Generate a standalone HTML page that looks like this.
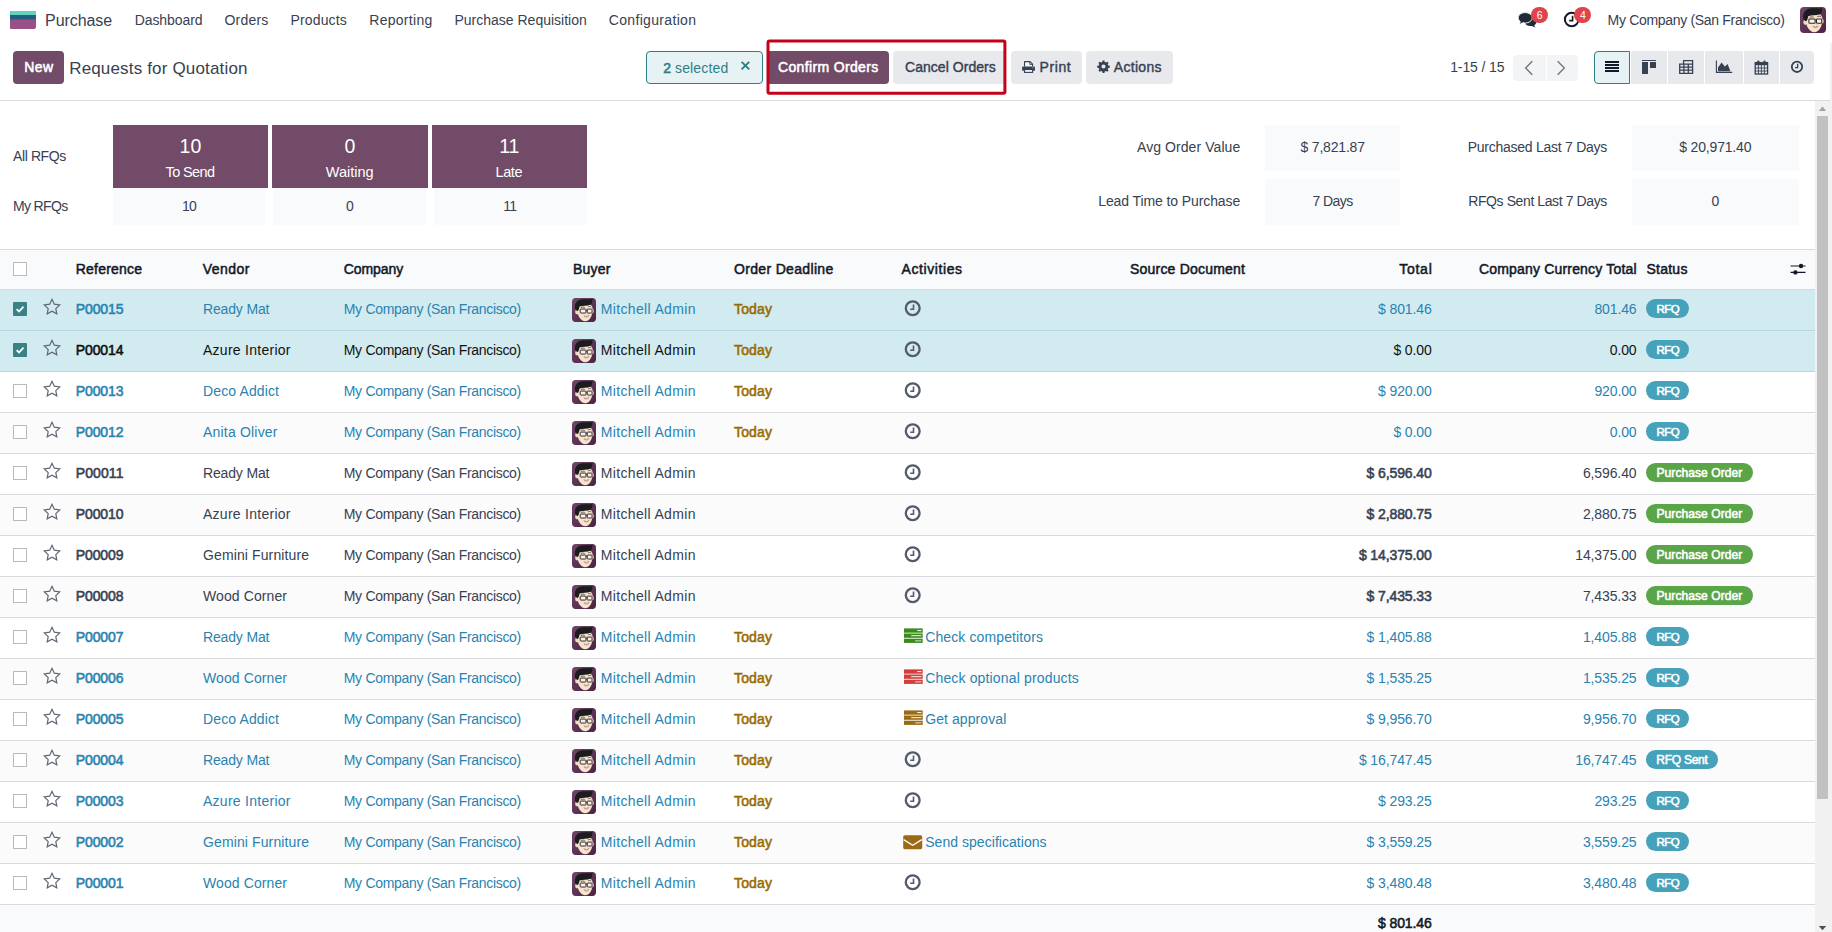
<!DOCTYPE html>
<html lang="en"><head><meta charset="utf-8"><title>Odoo - Requests for Quotation</title>
<style>
html,body{margin:0;padding:0;background:#fff;}
body{width:1832px;height:932px;overflow:hidden;position:relative;font-family:"Liberation Sans", sans-serif;}
.t{position:absolute;white-space:pre;line-height:20px;font-family:"Liberation Sans", sans-serif;}
svg{position:absolute;overflow:visible}
</style></head><body>
<div style="position:absolute;left:1830px;top:43px;width:2px;height:889px;background:#f0f0f0;"></div>
<svg style="left:10px;top:11px" width="26" height="18" viewBox="0 0 26 18"><defs><clipPath id="lg"><path d="M1.2 0 H25 Q26 0 26 1 V16.6 L24.6 18 H1 Q0 18 0 17 V1.2 Z"/></clipPath></defs><g clip-path="url(#lg)"><rect width="26" height="18" fill="#985086"/><rect width="26" height="8.4" fill="#21607c"/><rect width="26" height="4" fill="#64d2bc"/></g></svg>
<svg style="left:1517px;top:11px" width="21" height="18" viewBox="0 0 21 18"><path d="M13.2 7.2 C17 7.2 19.3 9 19.3 11.2 C19.3 12.6 18.4 13.7 17.2 14.4 L18.6 16.6 L14.6 15 C10.5 15.4 8 13.5 8 11.2 Z" fill="#1f2937"/><path d="M8.2 1.6 C12.2 1.6 15.2 3.9 15.2 6.8 C15.2 9.7 12.2 12 8.2 12 C7.4 12 6.6 11.9 5.9 11.7 L2 13.8 L3.3 10.7 C2 9.7 1.2 8.3 1.2 6.8 C1.2 3.9 4.2 1.6 8.2 1.6 Z" fill="#1f2937" stroke="#fff" stroke-width="0.9"/></svg>
<svg style="left:1563px;top:11px" width="18" height="18" viewBox="0 0 18 18"><circle cx="8.7" cy="8.5" r="6.8" fill="none" stroke="#111827" stroke-width="2"/><path d="M9.6 4.8 V9.6 H6.2" fill="none" stroke="#111827" stroke-width="1.6"/></svg>
<div style="position:absolute;left:1531px;top:7px;width:17px;height:16px;background:#e0444a;border-radius:8.5px;"></div>
<div style="position:absolute;left:1574.4px;top:7px;width:16.6px;height:16px;background:#e0444a;border-radius:8.5px;"></div>
<svg style="left:1800px;top:7px" width="26" height="26" viewBox="0 0 26 26"><defs><linearGradient id="avg0" x1="0" y1="0" x2="1" y2="1"><stop offset="0" stop-color="#71456a"/><stop offset="1" stop-color="#4a2342"/></linearGradient><clipPath id="avc0"><rect width="26" height="26" rx="4"/></clipPath></defs><g clip-path="url(#avc0)"><rect width="26" height="26" fill="url(#avg0)"/><ellipse cx="5.4" cy="15.2" rx="2" ry="2.7" fill="#f3d6bf"/><ellipse cx="22.3" cy="14.2" rx="1.4" ry="2.3" fill="#e9c4ab"/><path d="M5.6 12 C5.6 7.4 9 6 14 6 C19.4 6 22.4 8 22.4 12.4 C22.4 18 19.6 25.2 14.2 25.2 C9.4 25.2 5.6 19 5.6 12 Z" fill="#f8e3cf"/><path d="M3.3 11.4 C2.3 5.4 6 1.6 12 1.3 C16 1.1 19.6 2 22 0.9 C22.6 3.2 21.8 5.8 20 7.2 C16.4 8.8 11.4 7.8 8.2 9.2 C7.8 11.2 7.4 12.8 6.4 14.2 C5 13.8 3.7 13 3.3 11.4 Z" fill="#1c1c1e"/><path d="M9.6 10.5 C11 9.7 12.6 9.7 13.8 10.3 M17.2 9.6 C18.4 9 19.8 9 20.8 9.7" fill="none" stroke="#3b3331" stroke-width="0.8"/><rect x="8.9" y="12" width="6.2" height="4.3" rx="0.7" fill="#fbf4ee" fill-opacity="0.75" stroke="#29292b" stroke-width="1.05"/><rect x="16.5" y="12" width="5.2" height="4.3" rx="0.7" fill="#fbf4ee" fill-opacity="0.75" stroke="#29292b" stroke-width="1.05"/><path d="M15.1 13.2 H16.5" stroke="#29292b" stroke-width="0.9"/><path d="M12.9 19.2 C14.6 20.2 16.8 20.1 18.4 18.9 C17.6 21 13.9 21.3 12.9 19.2 Z" fill="#fff" stroke="#9a5f58" stroke-width="0.55"/><path d="M16.2 17.3 C16.8 17.7 17.4 17.6 17.8 17.2" fill="none" stroke="#e3a58f" stroke-width="0.6"/></g></svg>
<div style="position:absolute;left:0px;top:100px;width:1830px;height:1px;background:#d8dadd;"></div>
<div style="position:absolute;left:13px;top:51px;width:51px;height:33px;background:#714b67;border-radius:4px;"></div>
<div style="position:absolute;left:646px;top:51px;width:115px;height:31px;background:#e6f2f3;border:1px solid #2e7f86;border-radius:4px;"></div>
<svg style="left:740px;top:60.2px" width="11" height="11" viewBox="0 0 11 11"><path d="M1.6 1.8 L9.2 9.4 M9.2 1.8 L1.6 9.4" stroke="#2e7f86" stroke-width="1.9" fill="none"/></svg>
<div style="position:absolute;left:769px;top:51px;width:120px;height:33px;background:#714b67;border-radius:0 4px 4px 0;"></div>
<div style="position:absolute;left:893px;top:51px;width:111px;height:33px;background:#e7e9ed;border-radius:4px 0 0 4px;"></div>
<svg style="left:760px;top:35px" width="256" height="66" viewBox="760 35 256 66"><rect x="768" y="40.9" width="236.9" height="52.3" rx="1.5" fill="none" stroke="#c4001a" stroke-width="3"/></svg>
<div style="position:absolute;left:1011px;top:51px;width:71px;height:33px;background:#e7e9ed;border-radius:4px;"></div>
<svg style="left:1022px;top:60px" width="14" height="14" viewBox="0 0 14 14"><path d="M2.55 6.6 V1.6 H8 L10.6 4.2 V6.6" fill="#f3f4f6" stroke="#374151" stroke-width="1.1" stroke-linejoin="round"/><path d="M7.8 1.6 V4.4 H10.6" fill="none" stroke="#374151" stroke-width="0.9"/><rect x="0.1" y="6.4" width="12.9" height="4.4" rx="0.9" fill="#374151"/><rect x="2.55" y="9.5" width="8.05" height="2.9" fill="#f3f4f6" stroke="#374151" stroke-width="1.1"/><circle cx="11" cy="7.7" r="0.5" fill="#cfd6dc"/></svg>
<div style="position:absolute;left:1086px;top:51px;width:87px;height:33px;background:#e7e9ed;border-radius:4px;"></div>
<svg style="left:1096.8px;top:60px" width="13" height="13" viewBox="0 0 24 24"><path fill="#374151" fill-rule="evenodd" d="M10.3 0.8 h3.4 l0.6 3 a8.4 8.4 0 0 1 2.2 0.9 l2.5 -1.7 2.4 2.4 -1.7 2.5 a8.4 8.4 0 0 1 0.9 2.2 l3 0.6 v3.4 l-3 0.6 a8.4 8.4 0 0 1 -0.9 2.2 l1.7 2.5 -2.4 2.4 -2.5 -1.7 a8.4 8.4 0 0 1 -2.2 0.9 l-0.6 3 h-3.4 l-0.6 -3 a8.4 8.4 0 0 1 -2.2 -0.9 l-2.5 1.7 -2.4 -2.4 1.7 -2.5 a8.4 8.4 0 0 1 -0.9 -2.2 l-3 -0.6 v-3.4 l3 -0.6 a8.4 8.4 0 0 1 0.9 -2.2 l-1.7 -2.5 2.4 -2.4 2.5 1.7 a8.4 8.4 0 0 1 2.2 -0.9 Z M12 8.2 a3.8 3.8 0 1 0 0 7.6 a3.8 3.8 0 1 0 0 -7.6 Z"/></svg>
<div style="position:absolute;left:1513px;top:55px;width:32.5px;height:26px;background:#f3f4f6;border-radius:4px 0 0 4px;"></div>
<div style="position:absolute;left:1546.5px;top:55px;width:31.5px;height:26px;background:#f3f4f6;border-radius:0 4px 4px 0;"></div>
<svg style="left:1523px;top:60px" width="12" height="16" viewBox="0 0 12 16"><path d="M9.3 1.2 L2.6 8 L9.3 14.8" fill="none" stroke="#6b7280" stroke-width="1.3"/></svg>
<svg style="left:1555px;top:60px" width="12" height="16" viewBox="0 0 12 16"><path d="M2.7 1.2 L9.4 8 L2.7 14.8" fill="none" stroke="#6b7280" stroke-width="1.3"/></svg>
<div style="position:absolute;left:1594px;top:51px;width:34.2px;height:31px;background:#e6f2f3;border:1px solid #2e7f86;border-radius:4px 0 0 4px;"></div>
<div style="position:absolute;left:1631.2px;top:51px;width:35.6px;height:33px;background:#e7e9ed;border-radius:0;"></div>
<div style="position:absolute;left:1668.1px;top:51px;width:35.8px;height:33px;background:#e7e9ed;border-radius:0;"></div>
<div style="position:absolute;left:1705.1px;top:51px;width:37.7px;height:33px;background:#e7e9ed;border-radius:0;"></div>
<div style="position:absolute;left:1744.2px;top:51px;width:34.8px;height:33px;background:#e7e9ed;border-radius:0;"></div>
<div style="position:absolute;left:1780.1px;top:51px;width:34.0px;height:33px;background:#e7e9ed;border-radius:0 4px 4px 0;"></div>
<div style="position:absolute;left:1605px;top:61px;width:14px;height:2px;background:#111827;"></div>
<div style="position:absolute;left:1605px;top:64px;width:14px;height:2px;background:#111827;"></div>
<div style="position:absolute;left:1605px;top:67px;width:14px;height:2px;background:#111827;"></div>
<div style="position:absolute;left:1605px;top:70px;width:14px;height:2px;background:#111827;"></div>
<div style="position:absolute;left:1642px;top:60px;width:14.2px;height:0.9px;background:#374151;"></div>
<div style="position:absolute;left:1642px;top:62.2px;width:6px;height:11.4px;background:#374151;"></div>
<div style="position:absolute;left:1650px;top:62.2px;width:6.2px;height:5.8px;background:#374151;"></div>
<svg style="left:1679px;top:60px" width="15" height="14" viewBox="0 0 15 14"><path d="M4.6 4.2 V0.7 H13.6 V13.3 H0.7 V4.2 H13.6 M0.7 7.2 H13.6 M0.7 10.2 H13.6 M4.9 4.2 V13.3 M9.3 4.2 V13.3" fill="none" stroke="#374151" stroke-width="1.3"/></svg>
<svg style="left:1715px;top:60px" width="18" height="14" viewBox="0 0 18 14"><path d="M1.4 0.6 V12.4 H17.2" fill="none" stroke="#374151" stroke-width="1.1"/><path d="M3 11.2 V7.6 L6.6 2.4 L9.8 6.4 L12.6 4 L15.4 11.2 Z" fill="#374151"/></svg>
<svg style="left:1754px;top:59.5px" width="15" height="15" viewBox="0 0 15 15"><rect x="1.2" y="2.6" width="12.4" height="11.4" fill="none" stroke="#374151" stroke-width="1.3"/><rect x="1.2" y="2.6" width="12.4" height="2.6" fill="#374151"/><path d="M1.2 8 H13.6 M1.2 11 H13.6 M4.4 5 V14 M7.4 5 V14 M10.4 5 V14" stroke="#374151" stroke-width="0.9" fill="none"/><rect x="3.3" y="0.4" width="2" height="3.6" rx="0.8" fill="#374151"/><rect x="9.5" y="0.4" width="2" height="3.6" rx="0.8" fill="#374151"/></svg>
<svg style="left:1790px;top:60px" width="14" height="14" viewBox="0 0 14 14"><circle cx="7" cy="6.8" r="5.2" fill="none" stroke="#374151" stroke-width="1.8"/><path d="M7.6 3.8 V7.6 H5" fill="none" stroke="#374151" stroke-width="1.3"/></svg>
<div style="position:absolute;left:1815px;top:101px;width:17px;height:831px;background:#f1f1f1;"></div>
<div style="position:absolute;left:1817px;top:116px;width:11px;height:683px;background:#c1c1c1;"></div>
<svg style="left:1818px;top:106px" width="9" height="6" viewBox="0 0 9 6"><path d="M0.8 5 L4.5 0.6 L8.2 5 Z" fill="#a3a3a3"/></svg>
<svg style="left:1818px;top:925px" width="9" height="6" viewBox="0 0 9 6"><path d="M0.8 1 L4.5 5.2 L8.2 1 Z" fill="#505050"/></svg>
<div style="position:absolute;left:113px;top:125px;width:154.75px;height:62.75px;background:#714b67;"></div>
<div style="position:absolute;left:272px;top:125px;width:155.75px;height:62.75px;background:#714b67;"></div>
<div style="position:absolute;left:432px;top:125px;width:155px;height:62.75px;background:#714b67;"></div>
<div style="position:absolute;left:113px;top:187.75px;width:152px;height:36.75px;background:#f9fafb;border-radius:0 0 3px 3px;"></div>
<div style="position:absolute;left:272.5px;top:187.75px;width:153.25px;height:36.75px;background:#f9fafb;border-radius:0 0 3px 3px;"></div>
<div style="position:absolute;left:434px;top:187.75px;width:153px;height:36.75px;background:#f9fafb;border-radius:0 0 3px 3px;"></div>
<div style="position:absolute;left:1265px;top:125px;width:135px;height:45.75px;background:#f9fafb;"></div>
<div style="position:absolute;left:1265px;top:179.25px;width:135px;height:45.25px;background:#f9fafb;"></div>
<div style="position:absolute;left:1632px;top:125px;width:167px;height:45.75px;background:#f9fafb;"></div>
<div style="position:absolute;left:1632px;top:179.25px;width:167px;height:45.25px;background:#f9fafb;"></div>
<div style="position:absolute;left:0px;top:249px;width:1815px;height:1px;background:#d8dadd;"></div>
<div style="position:absolute;left:0px;top:250px;width:1815px;height:39px;background:#f9fafb;"></div>
<div style="position:absolute;left:0px;top:289px;width:1815px;height:1px;background:#d8dadd;"></div>
<div style="position:absolute;left:13px;top:262px;width:12px;height:12px;background:#fff;border:1px solid #b9b9b9;border-radius:0.5px;"></div>
<svg style="left:1790px;top:262px" width="16" height="14" viewBox="0 0 16 14"><path d="M0.5 4 H15.5 M0.5 10.4 H15.5" stroke="#111827" stroke-width="1.2"/><circle cx="11" cy="4" r="2.2" fill="#111827"/><circle cx="5.4" cy="10.4" r="2.2" fill="#111827"/></svg>
<div style="position:absolute;left:0px;top:290px;width:1815px;height:40px;background:#d2ebf0;"></div>
<div style="position:absolute;left:0px;top:330px;width:1815px;height:1px;background:#b9d6dd;"></div>
<div style="position:absolute;left:13px;top:302px;width:14px;height:14px;background:#3a8288;border-radius:1px;"></div>
<svg style="left:13px;top:302px" width="14" height="14" viewBox="0 0 14 14"><path d="M3.6 7.2 L6 9.5 L10.5 4.6" fill="none" stroke="#fff" stroke-width="1.8"/></svg>
<svg style="left:43px;top:298px" width="18" height="17" viewBox="0 0 18 17"><path d="M9 1.3 L11.3 6.2 L16.7 6.9 L12.8 10.6 L13.8 15.9 L9 13.3 L4.2 15.9 L5.2 10.6 L1.3 6.9 L6.7 6.2 Z" fill="none" stroke="#5f6675" stroke-width="1.2" stroke-linejoin="miter"/></svg>
<svg style="left:572px;top:298px" width="24" height="24" viewBox="0 0 26 26"><defs><linearGradient id="avg1" x1="0" y1="0" x2="1" y2="1"><stop offset="0" stop-color="#71456a"/><stop offset="1" stop-color="#4a2342"/></linearGradient><clipPath id="avc1"><rect width="26" height="26" rx="4"/></clipPath></defs><g clip-path="url(#avc1)"><rect width="26" height="26" fill="url(#avg1)"/><ellipse cx="5.4" cy="15.2" rx="2" ry="2.7" fill="#f3d6bf"/><ellipse cx="22.3" cy="14.2" rx="1.4" ry="2.3" fill="#e9c4ab"/><path d="M5.6 12 C5.6 7.4 9 6 14 6 C19.4 6 22.4 8 22.4 12.4 C22.4 18 19.6 25.2 14.2 25.2 C9.4 25.2 5.6 19 5.6 12 Z" fill="#f8e3cf"/><path d="M3.3 11.4 C2.3 5.4 6 1.6 12 1.3 C16 1.1 19.6 2 22 0.9 C22.6 3.2 21.8 5.8 20 7.2 C16.4 8.8 11.4 7.8 8.2 9.2 C7.8 11.2 7.4 12.8 6.4 14.2 C5 13.8 3.7 13 3.3 11.4 Z" fill="#1c1c1e"/><path d="M9.6 10.5 C11 9.7 12.6 9.7 13.8 10.3 M17.2 9.6 C18.4 9 19.8 9 20.8 9.7" fill="none" stroke="#3b3331" stroke-width="0.8"/><rect x="8.9" y="12" width="6.2" height="4.3" rx="0.7" fill="#fbf4ee" fill-opacity="0.75" stroke="#29292b" stroke-width="1.05"/><rect x="16.5" y="12" width="5.2" height="4.3" rx="0.7" fill="#fbf4ee" fill-opacity="0.75" stroke="#29292b" stroke-width="1.05"/><path d="M15.1 13.2 H16.5" stroke="#29292b" stroke-width="0.9"/><path d="M12.9 19.2 C14.6 20.2 16.8 20.1 18.4 18.9 C17.6 21 13.9 21.3 12.9 19.2 Z" fill="#fff" stroke="#9a5f58" stroke-width="0.55"/><path d="M16.2 17.3 C16.8 17.7 17.4 17.6 17.8 17.2" fill="none" stroke="#e3a58f" stroke-width="0.6"/></g></svg>
<svg style="left:904px;top:300px" width="18" height="18" viewBox="0 0 18 18"><circle cx="8.7" cy="8.3" r="6.9" fill="none" stroke="#555a6d" stroke-width="2.3"/><path d="M9.5 4.6 V9.2 H6.2" fill="none" stroke="#555a6d" stroke-width="1.6"/></svg>
<div style="position:absolute;left:1646px;top:299px;width:43px;height:19px;background:#46a2ba;border-radius:9.5px;"></div>
<div style="position:absolute;left:0px;top:331px;width:1815px;height:40px;background:#d2ebf0;"></div>
<div style="position:absolute;left:0px;top:371px;width:1815px;height:1px;background:#b9d6dd;"></div>
<div style="position:absolute;left:13px;top:343px;width:14px;height:14px;background:#3a8288;border-radius:1px;"></div>
<svg style="left:13px;top:343px" width="14" height="14" viewBox="0 0 14 14"><path d="M3.6 7.2 L6 9.5 L10.5 4.6" fill="none" stroke="#fff" stroke-width="1.8"/></svg>
<svg style="left:43px;top:339px" width="18" height="17" viewBox="0 0 18 17"><path d="M9 1.3 L11.3 6.2 L16.7 6.9 L12.8 10.6 L13.8 15.9 L9 13.3 L4.2 15.9 L5.2 10.6 L1.3 6.9 L6.7 6.2 Z" fill="none" stroke="#5f6675" stroke-width="1.2" stroke-linejoin="miter"/></svg>
<svg style="left:572px;top:339px" width="24" height="24" viewBox="0 0 26 26"><defs><linearGradient id="avg2" x1="0" y1="0" x2="1" y2="1"><stop offset="0" stop-color="#71456a"/><stop offset="1" stop-color="#4a2342"/></linearGradient><clipPath id="avc2"><rect width="26" height="26" rx="4"/></clipPath></defs><g clip-path="url(#avc2)"><rect width="26" height="26" fill="url(#avg2)"/><ellipse cx="5.4" cy="15.2" rx="2" ry="2.7" fill="#f3d6bf"/><ellipse cx="22.3" cy="14.2" rx="1.4" ry="2.3" fill="#e9c4ab"/><path d="M5.6 12 C5.6 7.4 9 6 14 6 C19.4 6 22.4 8 22.4 12.4 C22.4 18 19.6 25.2 14.2 25.2 C9.4 25.2 5.6 19 5.6 12 Z" fill="#f8e3cf"/><path d="M3.3 11.4 C2.3 5.4 6 1.6 12 1.3 C16 1.1 19.6 2 22 0.9 C22.6 3.2 21.8 5.8 20 7.2 C16.4 8.8 11.4 7.8 8.2 9.2 C7.8 11.2 7.4 12.8 6.4 14.2 C5 13.8 3.7 13 3.3 11.4 Z" fill="#1c1c1e"/><path d="M9.6 10.5 C11 9.7 12.6 9.7 13.8 10.3 M17.2 9.6 C18.4 9 19.8 9 20.8 9.7" fill="none" stroke="#3b3331" stroke-width="0.8"/><rect x="8.9" y="12" width="6.2" height="4.3" rx="0.7" fill="#fbf4ee" fill-opacity="0.75" stroke="#29292b" stroke-width="1.05"/><rect x="16.5" y="12" width="5.2" height="4.3" rx="0.7" fill="#fbf4ee" fill-opacity="0.75" stroke="#29292b" stroke-width="1.05"/><path d="M15.1 13.2 H16.5" stroke="#29292b" stroke-width="0.9"/><path d="M12.9 19.2 C14.6 20.2 16.8 20.1 18.4 18.9 C17.6 21 13.9 21.3 12.9 19.2 Z" fill="#fff" stroke="#9a5f58" stroke-width="0.55"/><path d="M16.2 17.3 C16.8 17.7 17.4 17.6 17.8 17.2" fill="none" stroke="#e3a58f" stroke-width="0.6"/></g></svg>
<svg style="left:904px;top:341px" width="18" height="18" viewBox="0 0 18 18"><circle cx="8.7" cy="8.3" r="6.9" fill="none" stroke="#555a6d" stroke-width="2.3"/><path d="M9.5 4.6 V9.2 H6.2" fill="none" stroke="#555a6d" stroke-width="1.6"/></svg>
<div style="position:absolute;left:1646px;top:340px;width:43px;height:19px;background:#46a2ba;border-radius:9.5px;"></div>
<div style="position:absolute;left:0px;top:372px;width:1815px;height:40px;background:#fff;"></div>
<div style="position:absolute;left:0px;top:412px;width:1815px;height:1px;background:#d8dadd;"></div>
<div style="position:absolute;left:13px;top:384px;width:12px;height:12px;background:#fff;border:1px solid #b9b9b9;border-radius:0.5px;"></div>
<svg style="left:43px;top:380px" width="18" height="17" viewBox="0 0 18 17"><path d="M9 1.3 L11.3 6.2 L16.7 6.9 L12.8 10.6 L13.8 15.9 L9 13.3 L4.2 15.9 L5.2 10.6 L1.3 6.9 L6.7 6.2 Z" fill="none" stroke="#5f6675" stroke-width="1.2" stroke-linejoin="miter"/></svg>
<svg style="left:572px;top:380px" width="24" height="24" viewBox="0 0 26 26"><defs><linearGradient id="avg3" x1="0" y1="0" x2="1" y2="1"><stop offset="0" stop-color="#71456a"/><stop offset="1" stop-color="#4a2342"/></linearGradient><clipPath id="avc3"><rect width="26" height="26" rx="4"/></clipPath></defs><g clip-path="url(#avc3)"><rect width="26" height="26" fill="url(#avg3)"/><ellipse cx="5.4" cy="15.2" rx="2" ry="2.7" fill="#f3d6bf"/><ellipse cx="22.3" cy="14.2" rx="1.4" ry="2.3" fill="#e9c4ab"/><path d="M5.6 12 C5.6 7.4 9 6 14 6 C19.4 6 22.4 8 22.4 12.4 C22.4 18 19.6 25.2 14.2 25.2 C9.4 25.2 5.6 19 5.6 12 Z" fill="#f8e3cf"/><path d="M3.3 11.4 C2.3 5.4 6 1.6 12 1.3 C16 1.1 19.6 2 22 0.9 C22.6 3.2 21.8 5.8 20 7.2 C16.4 8.8 11.4 7.8 8.2 9.2 C7.8 11.2 7.4 12.8 6.4 14.2 C5 13.8 3.7 13 3.3 11.4 Z" fill="#1c1c1e"/><path d="M9.6 10.5 C11 9.7 12.6 9.7 13.8 10.3 M17.2 9.6 C18.4 9 19.8 9 20.8 9.7" fill="none" stroke="#3b3331" stroke-width="0.8"/><rect x="8.9" y="12" width="6.2" height="4.3" rx="0.7" fill="#fbf4ee" fill-opacity="0.75" stroke="#29292b" stroke-width="1.05"/><rect x="16.5" y="12" width="5.2" height="4.3" rx="0.7" fill="#fbf4ee" fill-opacity="0.75" stroke="#29292b" stroke-width="1.05"/><path d="M15.1 13.2 H16.5" stroke="#29292b" stroke-width="0.9"/><path d="M12.9 19.2 C14.6 20.2 16.8 20.1 18.4 18.9 C17.6 21 13.9 21.3 12.9 19.2 Z" fill="#fff" stroke="#9a5f58" stroke-width="0.55"/><path d="M16.2 17.3 C16.8 17.7 17.4 17.6 17.8 17.2" fill="none" stroke="#e3a58f" stroke-width="0.6"/></g></svg>
<svg style="left:904px;top:382px" width="18" height="18" viewBox="0 0 18 18"><circle cx="8.7" cy="8.3" r="6.9" fill="none" stroke="#555a6d" stroke-width="2.3"/><path d="M9.5 4.6 V9.2 H6.2" fill="none" stroke="#555a6d" stroke-width="1.6"/></svg>
<div style="position:absolute;left:1646px;top:381px;width:43px;height:19px;background:#46a2ba;border-radius:9.5px;"></div>
<div style="position:absolute;left:0px;top:413px;width:1815px;height:40px;background:#fbfbfc;"></div>
<div style="position:absolute;left:0px;top:453px;width:1815px;height:1px;background:#d8dadd;"></div>
<div style="position:absolute;left:13px;top:425px;width:12px;height:12px;background:#fff;border:1px solid #b9b9b9;border-radius:0.5px;"></div>
<svg style="left:43px;top:421px" width="18" height="17" viewBox="0 0 18 17"><path d="M9 1.3 L11.3 6.2 L16.7 6.9 L12.8 10.6 L13.8 15.9 L9 13.3 L4.2 15.9 L5.2 10.6 L1.3 6.9 L6.7 6.2 Z" fill="none" stroke="#5f6675" stroke-width="1.2" stroke-linejoin="miter"/></svg>
<svg style="left:572px;top:421px" width="24" height="24" viewBox="0 0 26 26"><defs><linearGradient id="avg4" x1="0" y1="0" x2="1" y2="1"><stop offset="0" stop-color="#71456a"/><stop offset="1" stop-color="#4a2342"/></linearGradient><clipPath id="avc4"><rect width="26" height="26" rx="4"/></clipPath></defs><g clip-path="url(#avc4)"><rect width="26" height="26" fill="url(#avg4)"/><ellipse cx="5.4" cy="15.2" rx="2" ry="2.7" fill="#f3d6bf"/><ellipse cx="22.3" cy="14.2" rx="1.4" ry="2.3" fill="#e9c4ab"/><path d="M5.6 12 C5.6 7.4 9 6 14 6 C19.4 6 22.4 8 22.4 12.4 C22.4 18 19.6 25.2 14.2 25.2 C9.4 25.2 5.6 19 5.6 12 Z" fill="#f8e3cf"/><path d="M3.3 11.4 C2.3 5.4 6 1.6 12 1.3 C16 1.1 19.6 2 22 0.9 C22.6 3.2 21.8 5.8 20 7.2 C16.4 8.8 11.4 7.8 8.2 9.2 C7.8 11.2 7.4 12.8 6.4 14.2 C5 13.8 3.7 13 3.3 11.4 Z" fill="#1c1c1e"/><path d="M9.6 10.5 C11 9.7 12.6 9.7 13.8 10.3 M17.2 9.6 C18.4 9 19.8 9 20.8 9.7" fill="none" stroke="#3b3331" stroke-width="0.8"/><rect x="8.9" y="12" width="6.2" height="4.3" rx="0.7" fill="#fbf4ee" fill-opacity="0.75" stroke="#29292b" stroke-width="1.05"/><rect x="16.5" y="12" width="5.2" height="4.3" rx="0.7" fill="#fbf4ee" fill-opacity="0.75" stroke="#29292b" stroke-width="1.05"/><path d="M15.1 13.2 H16.5" stroke="#29292b" stroke-width="0.9"/><path d="M12.9 19.2 C14.6 20.2 16.8 20.1 18.4 18.9 C17.6 21 13.9 21.3 12.9 19.2 Z" fill="#fff" stroke="#9a5f58" stroke-width="0.55"/><path d="M16.2 17.3 C16.8 17.7 17.4 17.6 17.8 17.2" fill="none" stroke="#e3a58f" stroke-width="0.6"/></g></svg>
<svg style="left:904px;top:423px" width="18" height="18" viewBox="0 0 18 18"><circle cx="8.7" cy="8.3" r="6.9" fill="none" stroke="#555a6d" stroke-width="2.3"/><path d="M9.5 4.6 V9.2 H6.2" fill="none" stroke="#555a6d" stroke-width="1.6"/></svg>
<div style="position:absolute;left:1646px;top:422px;width:43px;height:19px;background:#46a2ba;border-radius:9.5px;"></div>
<div style="position:absolute;left:0px;top:454px;width:1815px;height:40px;background:#fff;"></div>
<div style="position:absolute;left:0px;top:494px;width:1815px;height:1px;background:#d8dadd;"></div>
<div style="position:absolute;left:13px;top:466px;width:12px;height:12px;background:#fff;border:1px solid #b9b9b9;border-radius:0.5px;"></div>
<svg style="left:43px;top:462px" width="18" height="17" viewBox="0 0 18 17"><path d="M9 1.3 L11.3 6.2 L16.7 6.9 L12.8 10.6 L13.8 15.9 L9 13.3 L4.2 15.9 L5.2 10.6 L1.3 6.9 L6.7 6.2 Z" fill="none" stroke="#5f6675" stroke-width="1.2" stroke-linejoin="miter"/></svg>
<svg style="left:572px;top:462px" width="24" height="24" viewBox="0 0 26 26"><defs><linearGradient id="avg5" x1="0" y1="0" x2="1" y2="1"><stop offset="0" stop-color="#71456a"/><stop offset="1" stop-color="#4a2342"/></linearGradient><clipPath id="avc5"><rect width="26" height="26" rx="4"/></clipPath></defs><g clip-path="url(#avc5)"><rect width="26" height="26" fill="url(#avg5)"/><ellipse cx="5.4" cy="15.2" rx="2" ry="2.7" fill="#f3d6bf"/><ellipse cx="22.3" cy="14.2" rx="1.4" ry="2.3" fill="#e9c4ab"/><path d="M5.6 12 C5.6 7.4 9 6 14 6 C19.4 6 22.4 8 22.4 12.4 C22.4 18 19.6 25.2 14.2 25.2 C9.4 25.2 5.6 19 5.6 12 Z" fill="#f8e3cf"/><path d="M3.3 11.4 C2.3 5.4 6 1.6 12 1.3 C16 1.1 19.6 2 22 0.9 C22.6 3.2 21.8 5.8 20 7.2 C16.4 8.8 11.4 7.8 8.2 9.2 C7.8 11.2 7.4 12.8 6.4 14.2 C5 13.8 3.7 13 3.3 11.4 Z" fill="#1c1c1e"/><path d="M9.6 10.5 C11 9.7 12.6 9.7 13.8 10.3 M17.2 9.6 C18.4 9 19.8 9 20.8 9.7" fill="none" stroke="#3b3331" stroke-width="0.8"/><rect x="8.9" y="12" width="6.2" height="4.3" rx="0.7" fill="#fbf4ee" fill-opacity="0.75" stroke="#29292b" stroke-width="1.05"/><rect x="16.5" y="12" width="5.2" height="4.3" rx="0.7" fill="#fbf4ee" fill-opacity="0.75" stroke="#29292b" stroke-width="1.05"/><path d="M15.1 13.2 H16.5" stroke="#29292b" stroke-width="0.9"/><path d="M12.9 19.2 C14.6 20.2 16.8 20.1 18.4 18.9 C17.6 21 13.9 21.3 12.9 19.2 Z" fill="#fff" stroke="#9a5f58" stroke-width="0.55"/><path d="M16.2 17.3 C16.8 17.7 17.4 17.6 17.8 17.2" fill="none" stroke="#e3a58f" stroke-width="0.6"/></g></svg>
<svg style="left:904px;top:464px" width="18" height="18" viewBox="0 0 18 18"><circle cx="8.7" cy="8.3" r="6.9" fill="none" stroke="#555a6d" stroke-width="2.3"/><path d="M9.5 4.6 V9.2 H6.2" fill="none" stroke="#555a6d" stroke-width="1.6"/></svg>
<div style="position:absolute;left:1646px;top:463px;width:107px;height:19px;background:#5aa548;border-radius:9.5px;"></div>
<div style="position:absolute;left:0px;top:495px;width:1815px;height:40px;background:#fbfbfc;"></div>
<div style="position:absolute;left:0px;top:535px;width:1815px;height:1px;background:#d8dadd;"></div>
<div style="position:absolute;left:13px;top:507px;width:12px;height:12px;background:#fff;border:1px solid #b9b9b9;border-radius:0.5px;"></div>
<svg style="left:43px;top:503px" width="18" height="17" viewBox="0 0 18 17"><path d="M9 1.3 L11.3 6.2 L16.7 6.9 L12.8 10.6 L13.8 15.9 L9 13.3 L4.2 15.9 L5.2 10.6 L1.3 6.9 L6.7 6.2 Z" fill="none" stroke="#5f6675" stroke-width="1.2" stroke-linejoin="miter"/></svg>
<svg style="left:572px;top:503px" width="24" height="24" viewBox="0 0 26 26"><defs><linearGradient id="avg6" x1="0" y1="0" x2="1" y2="1"><stop offset="0" stop-color="#71456a"/><stop offset="1" stop-color="#4a2342"/></linearGradient><clipPath id="avc6"><rect width="26" height="26" rx="4"/></clipPath></defs><g clip-path="url(#avc6)"><rect width="26" height="26" fill="url(#avg6)"/><ellipse cx="5.4" cy="15.2" rx="2" ry="2.7" fill="#f3d6bf"/><ellipse cx="22.3" cy="14.2" rx="1.4" ry="2.3" fill="#e9c4ab"/><path d="M5.6 12 C5.6 7.4 9 6 14 6 C19.4 6 22.4 8 22.4 12.4 C22.4 18 19.6 25.2 14.2 25.2 C9.4 25.2 5.6 19 5.6 12 Z" fill="#f8e3cf"/><path d="M3.3 11.4 C2.3 5.4 6 1.6 12 1.3 C16 1.1 19.6 2 22 0.9 C22.6 3.2 21.8 5.8 20 7.2 C16.4 8.8 11.4 7.8 8.2 9.2 C7.8 11.2 7.4 12.8 6.4 14.2 C5 13.8 3.7 13 3.3 11.4 Z" fill="#1c1c1e"/><path d="M9.6 10.5 C11 9.7 12.6 9.7 13.8 10.3 M17.2 9.6 C18.4 9 19.8 9 20.8 9.7" fill="none" stroke="#3b3331" stroke-width="0.8"/><rect x="8.9" y="12" width="6.2" height="4.3" rx="0.7" fill="#fbf4ee" fill-opacity="0.75" stroke="#29292b" stroke-width="1.05"/><rect x="16.5" y="12" width="5.2" height="4.3" rx="0.7" fill="#fbf4ee" fill-opacity="0.75" stroke="#29292b" stroke-width="1.05"/><path d="M15.1 13.2 H16.5" stroke="#29292b" stroke-width="0.9"/><path d="M12.9 19.2 C14.6 20.2 16.8 20.1 18.4 18.9 C17.6 21 13.9 21.3 12.9 19.2 Z" fill="#fff" stroke="#9a5f58" stroke-width="0.55"/><path d="M16.2 17.3 C16.8 17.7 17.4 17.6 17.8 17.2" fill="none" stroke="#e3a58f" stroke-width="0.6"/></g></svg>
<svg style="left:904px;top:505px" width="18" height="18" viewBox="0 0 18 18"><circle cx="8.7" cy="8.3" r="6.9" fill="none" stroke="#555a6d" stroke-width="2.3"/><path d="M9.5 4.6 V9.2 H6.2" fill="none" stroke="#555a6d" stroke-width="1.6"/></svg>
<div style="position:absolute;left:1646px;top:504px;width:107px;height:19px;background:#5aa548;border-radius:9.5px;"></div>
<div style="position:absolute;left:0px;top:536px;width:1815px;height:40px;background:#fff;"></div>
<div style="position:absolute;left:0px;top:576px;width:1815px;height:1px;background:#d8dadd;"></div>
<div style="position:absolute;left:13px;top:548px;width:12px;height:12px;background:#fff;border:1px solid #b9b9b9;border-radius:0.5px;"></div>
<svg style="left:43px;top:544px" width="18" height="17" viewBox="0 0 18 17"><path d="M9 1.3 L11.3 6.2 L16.7 6.9 L12.8 10.6 L13.8 15.9 L9 13.3 L4.2 15.9 L5.2 10.6 L1.3 6.9 L6.7 6.2 Z" fill="none" stroke="#5f6675" stroke-width="1.2" stroke-linejoin="miter"/></svg>
<svg style="left:572px;top:544px" width="24" height="24" viewBox="0 0 26 26"><defs><linearGradient id="avg7" x1="0" y1="0" x2="1" y2="1"><stop offset="0" stop-color="#71456a"/><stop offset="1" stop-color="#4a2342"/></linearGradient><clipPath id="avc7"><rect width="26" height="26" rx="4"/></clipPath></defs><g clip-path="url(#avc7)"><rect width="26" height="26" fill="url(#avg7)"/><ellipse cx="5.4" cy="15.2" rx="2" ry="2.7" fill="#f3d6bf"/><ellipse cx="22.3" cy="14.2" rx="1.4" ry="2.3" fill="#e9c4ab"/><path d="M5.6 12 C5.6 7.4 9 6 14 6 C19.4 6 22.4 8 22.4 12.4 C22.4 18 19.6 25.2 14.2 25.2 C9.4 25.2 5.6 19 5.6 12 Z" fill="#f8e3cf"/><path d="M3.3 11.4 C2.3 5.4 6 1.6 12 1.3 C16 1.1 19.6 2 22 0.9 C22.6 3.2 21.8 5.8 20 7.2 C16.4 8.8 11.4 7.8 8.2 9.2 C7.8 11.2 7.4 12.8 6.4 14.2 C5 13.8 3.7 13 3.3 11.4 Z" fill="#1c1c1e"/><path d="M9.6 10.5 C11 9.7 12.6 9.7 13.8 10.3 M17.2 9.6 C18.4 9 19.8 9 20.8 9.7" fill="none" stroke="#3b3331" stroke-width="0.8"/><rect x="8.9" y="12" width="6.2" height="4.3" rx="0.7" fill="#fbf4ee" fill-opacity="0.75" stroke="#29292b" stroke-width="1.05"/><rect x="16.5" y="12" width="5.2" height="4.3" rx="0.7" fill="#fbf4ee" fill-opacity="0.75" stroke="#29292b" stroke-width="1.05"/><path d="M15.1 13.2 H16.5" stroke="#29292b" stroke-width="0.9"/><path d="M12.9 19.2 C14.6 20.2 16.8 20.1 18.4 18.9 C17.6 21 13.9 21.3 12.9 19.2 Z" fill="#fff" stroke="#9a5f58" stroke-width="0.55"/><path d="M16.2 17.3 C16.8 17.7 17.4 17.6 17.8 17.2" fill="none" stroke="#e3a58f" stroke-width="0.6"/></g></svg>
<svg style="left:904px;top:546px" width="18" height="18" viewBox="0 0 18 18"><circle cx="8.7" cy="8.3" r="6.9" fill="none" stroke="#555a6d" stroke-width="2.3"/><path d="M9.5 4.6 V9.2 H6.2" fill="none" stroke="#555a6d" stroke-width="1.6"/></svg>
<div style="position:absolute;left:1646px;top:545px;width:107px;height:19px;background:#5aa548;border-radius:9.5px;"></div>
<div style="position:absolute;left:0px;top:577px;width:1815px;height:40px;background:#fbfbfc;"></div>
<div style="position:absolute;left:0px;top:617px;width:1815px;height:1px;background:#d8dadd;"></div>
<div style="position:absolute;left:13px;top:589px;width:12px;height:12px;background:#fff;border:1px solid #b9b9b9;border-radius:0.5px;"></div>
<svg style="left:43px;top:585px" width="18" height="17" viewBox="0 0 18 17"><path d="M9 1.3 L11.3 6.2 L16.7 6.9 L12.8 10.6 L13.8 15.9 L9 13.3 L4.2 15.9 L5.2 10.6 L1.3 6.9 L6.7 6.2 Z" fill="none" stroke="#5f6675" stroke-width="1.2" stroke-linejoin="miter"/></svg>
<svg style="left:572px;top:585px" width="24" height="24" viewBox="0 0 26 26"><defs><linearGradient id="avg8" x1="0" y1="0" x2="1" y2="1"><stop offset="0" stop-color="#71456a"/><stop offset="1" stop-color="#4a2342"/></linearGradient><clipPath id="avc8"><rect width="26" height="26" rx="4"/></clipPath></defs><g clip-path="url(#avc8)"><rect width="26" height="26" fill="url(#avg8)"/><ellipse cx="5.4" cy="15.2" rx="2" ry="2.7" fill="#f3d6bf"/><ellipse cx="22.3" cy="14.2" rx="1.4" ry="2.3" fill="#e9c4ab"/><path d="M5.6 12 C5.6 7.4 9 6 14 6 C19.4 6 22.4 8 22.4 12.4 C22.4 18 19.6 25.2 14.2 25.2 C9.4 25.2 5.6 19 5.6 12 Z" fill="#f8e3cf"/><path d="M3.3 11.4 C2.3 5.4 6 1.6 12 1.3 C16 1.1 19.6 2 22 0.9 C22.6 3.2 21.8 5.8 20 7.2 C16.4 8.8 11.4 7.8 8.2 9.2 C7.8 11.2 7.4 12.8 6.4 14.2 C5 13.8 3.7 13 3.3 11.4 Z" fill="#1c1c1e"/><path d="M9.6 10.5 C11 9.7 12.6 9.7 13.8 10.3 M17.2 9.6 C18.4 9 19.8 9 20.8 9.7" fill="none" stroke="#3b3331" stroke-width="0.8"/><rect x="8.9" y="12" width="6.2" height="4.3" rx="0.7" fill="#fbf4ee" fill-opacity="0.75" stroke="#29292b" stroke-width="1.05"/><rect x="16.5" y="12" width="5.2" height="4.3" rx="0.7" fill="#fbf4ee" fill-opacity="0.75" stroke="#29292b" stroke-width="1.05"/><path d="M15.1 13.2 H16.5" stroke="#29292b" stroke-width="0.9"/><path d="M12.9 19.2 C14.6 20.2 16.8 20.1 18.4 18.9 C17.6 21 13.9 21.3 12.9 19.2 Z" fill="#fff" stroke="#9a5f58" stroke-width="0.55"/><path d="M16.2 17.3 C16.8 17.7 17.4 17.6 17.8 17.2" fill="none" stroke="#e3a58f" stroke-width="0.6"/></g></svg>
<svg style="left:904px;top:587px" width="18" height="18" viewBox="0 0 18 18"><circle cx="8.7" cy="8.3" r="6.9" fill="none" stroke="#555a6d" stroke-width="2.3"/><path d="M9.5 4.6 V9.2 H6.2" fill="none" stroke="#555a6d" stroke-width="1.6"/></svg>
<div style="position:absolute;left:1646px;top:586px;width:107px;height:19px;background:#5aa548;border-radius:9.5px;"></div>
<div style="position:absolute;left:0px;top:618px;width:1815px;height:40px;background:#fff;"></div>
<div style="position:absolute;left:0px;top:658px;width:1815px;height:1px;background:#d8dadd;"></div>
<div style="position:absolute;left:13px;top:630px;width:12px;height:12px;background:#fff;border:1px solid #b9b9b9;border-radius:0.5px;"></div>
<svg style="left:43px;top:626px" width="18" height="17" viewBox="0 0 18 17"><path d="M9 1.3 L11.3 6.2 L16.7 6.9 L12.8 10.6 L13.8 15.9 L9 13.3 L4.2 15.9 L5.2 10.6 L1.3 6.9 L6.7 6.2 Z" fill="none" stroke="#5f6675" stroke-width="1.2" stroke-linejoin="miter"/></svg>
<svg style="left:572px;top:626px" width="24" height="24" viewBox="0 0 26 26"><defs><linearGradient id="avg9" x1="0" y1="0" x2="1" y2="1"><stop offset="0" stop-color="#71456a"/><stop offset="1" stop-color="#4a2342"/></linearGradient><clipPath id="avc9"><rect width="26" height="26" rx="4"/></clipPath></defs><g clip-path="url(#avc9)"><rect width="26" height="26" fill="url(#avg9)"/><ellipse cx="5.4" cy="15.2" rx="2" ry="2.7" fill="#f3d6bf"/><ellipse cx="22.3" cy="14.2" rx="1.4" ry="2.3" fill="#e9c4ab"/><path d="M5.6 12 C5.6 7.4 9 6 14 6 C19.4 6 22.4 8 22.4 12.4 C22.4 18 19.6 25.2 14.2 25.2 C9.4 25.2 5.6 19 5.6 12 Z" fill="#f8e3cf"/><path d="M3.3 11.4 C2.3 5.4 6 1.6 12 1.3 C16 1.1 19.6 2 22 0.9 C22.6 3.2 21.8 5.8 20 7.2 C16.4 8.8 11.4 7.8 8.2 9.2 C7.8 11.2 7.4 12.8 6.4 14.2 C5 13.8 3.7 13 3.3 11.4 Z" fill="#1c1c1e"/><path d="M9.6 10.5 C11 9.7 12.6 9.7 13.8 10.3 M17.2 9.6 C18.4 9 19.8 9 20.8 9.7" fill="none" stroke="#3b3331" stroke-width="0.8"/><rect x="8.9" y="12" width="6.2" height="4.3" rx="0.7" fill="#fbf4ee" fill-opacity="0.75" stroke="#29292b" stroke-width="1.05"/><rect x="16.5" y="12" width="5.2" height="4.3" rx="0.7" fill="#fbf4ee" fill-opacity="0.75" stroke="#29292b" stroke-width="1.05"/><path d="M15.1 13.2 H16.5" stroke="#29292b" stroke-width="0.9"/><path d="M12.9 19.2 C14.6 20.2 16.8 20.1 18.4 18.9 C17.6 21 13.9 21.3 12.9 19.2 Z" fill="#fff" stroke="#9a5f58" stroke-width="0.55"/><path d="M16.2 17.3 C16.8 17.7 17.4 17.6 17.8 17.2" fill="none" stroke="#e3a58f" stroke-width="0.6"/></g></svg>
<svg style="left:903.5px;top:628px" width="19" height="16" viewBox="0 0 19 16"><rect x="0" y="0.4" width="18.7" height="4.3" fill="#3a8a1c"/><rect x="0" y="5.5" width="18.7" height="4.3" fill="#3a8a1c"/><rect x="0" y="10.7" width="18.7" height="4.2" fill="#3a8a1c"/><rect x="13.2" y="2" width="4.2" height="1.1" fill="#fff" opacity="0.9"/><rect x="7.2" y="7.1" width="10.2" height="1.1" fill="#fff" opacity="0.85"/><rect x="11.2" y="12.3" width="6.2" height="1.1" fill="#fff" opacity="0.7"/></svg>
<div style="position:absolute;left:1646px;top:627px;width:43px;height:19px;background:#46a2ba;border-radius:9.5px;"></div>
<div style="position:absolute;left:0px;top:659px;width:1815px;height:40px;background:#fbfbfc;"></div>
<div style="position:absolute;left:0px;top:699px;width:1815px;height:1px;background:#d8dadd;"></div>
<div style="position:absolute;left:13px;top:671px;width:12px;height:12px;background:#fff;border:1px solid #b9b9b9;border-radius:0.5px;"></div>
<svg style="left:43px;top:667px" width="18" height="17" viewBox="0 0 18 17"><path d="M9 1.3 L11.3 6.2 L16.7 6.9 L12.8 10.6 L13.8 15.9 L9 13.3 L4.2 15.9 L5.2 10.6 L1.3 6.9 L6.7 6.2 Z" fill="none" stroke="#5f6675" stroke-width="1.2" stroke-linejoin="miter"/></svg>
<svg style="left:572px;top:667px" width="24" height="24" viewBox="0 0 26 26"><defs><linearGradient id="avg10" x1="0" y1="0" x2="1" y2="1"><stop offset="0" stop-color="#71456a"/><stop offset="1" stop-color="#4a2342"/></linearGradient><clipPath id="avc10"><rect width="26" height="26" rx="4"/></clipPath></defs><g clip-path="url(#avc10)"><rect width="26" height="26" fill="url(#avg10)"/><ellipse cx="5.4" cy="15.2" rx="2" ry="2.7" fill="#f3d6bf"/><ellipse cx="22.3" cy="14.2" rx="1.4" ry="2.3" fill="#e9c4ab"/><path d="M5.6 12 C5.6 7.4 9 6 14 6 C19.4 6 22.4 8 22.4 12.4 C22.4 18 19.6 25.2 14.2 25.2 C9.4 25.2 5.6 19 5.6 12 Z" fill="#f8e3cf"/><path d="M3.3 11.4 C2.3 5.4 6 1.6 12 1.3 C16 1.1 19.6 2 22 0.9 C22.6 3.2 21.8 5.8 20 7.2 C16.4 8.8 11.4 7.8 8.2 9.2 C7.8 11.2 7.4 12.8 6.4 14.2 C5 13.8 3.7 13 3.3 11.4 Z" fill="#1c1c1e"/><path d="M9.6 10.5 C11 9.7 12.6 9.7 13.8 10.3 M17.2 9.6 C18.4 9 19.8 9 20.8 9.7" fill="none" stroke="#3b3331" stroke-width="0.8"/><rect x="8.9" y="12" width="6.2" height="4.3" rx="0.7" fill="#fbf4ee" fill-opacity="0.75" stroke="#29292b" stroke-width="1.05"/><rect x="16.5" y="12" width="5.2" height="4.3" rx="0.7" fill="#fbf4ee" fill-opacity="0.75" stroke="#29292b" stroke-width="1.05"/><path d="M15.1 13.2 H16.5" stroke="#29292b" stroke-width="0.9"/><path d="M12.9 19.2 C14.6 20.2 16.8 20.1 18.4 18.9 C17.6 21 13.9 21.3 12.9 19.2 Z" fill="#fff" stroke="#9a5f58" stroke-width="0.55"/><path d="M16.2 17.3 C16.8 17.7 17.4 17.6 17.8 17.2" fill="none" stroke="#e3a58f" stroke-width="0.6"/></g></svg>
<svg style="left:903.5px;top:669px" width="19" height="16" viewBox="0 0 19 16"><rect x="0" y="0.4" width="18.7" height="4.3" fill="#d23f3a"/><rect x="0" y="5.5" width="18.7" height="4.3" fill="#d23f3a"/><rect x="0" y="10.7" width="18.7" height="4.2" fill="#d23f3a"/><rect x="13.2" y="2" width="4.2" height="1.1" fill="#fff" opacity="0.9"/><rect x="7.2" y="7.1" width="10.2" height="1.1" fill="#fff" opacity="0.85"/><rect x="11.2" y="12.3" width="6.2" height="1.1" fill="#fff" opacity="0.7"/></svg>
<div style="position:absolute;left:1646px;top:668px;width:43px;height:19px;background:#46a2ba;border-radius:9.5px;"></div>
<div style="position:absolute;left:0px;top:700px;width:1815px;height:40px;background:#fff;"></div>
<div style="position:absolute;left:0px;top:740px;width:1815px;height:1px;background:#d8dadd;"></div>
<div style="position:absolute;left:13px;top:712px;width:12px;height:12px;background:#fff;border:1px solid #b9b9b9;border-radius:0.5px;"></div>
<svg style="left:43px;top:708px" width="18" height="17" viewBox="0 0 18 17"><path d="M9 1.3 L11.3 6.2 L16.7 6.9 L12.8 10.6 L13.8 15.9 L9 13.3 L4.2 15.9 L5.2 10.6 L1.3 6.9 L6.7 6.2 Z" fill="none" stroke="#5f6675" stroke-width="1.2" stroke-linejoin="miter"/></svg>
<svg style="left:572px;top:708px" width="24" height="24" viewBox="0 0 26 26"><defs><linearGradient id="avg11" x1="0" y1="0" x2="1" y2="1"><stop offset="0" stop-color="#71456a"/><stop offset="1" stop-color="#4a2342"/></linearGradient><clipPath id="avc11"><rect width="26" height="26" rx="4"/></clipPath></defs><g clip-path="url(#avc11)"><rect width="26" height="26" fill="url(#avg11)"/><ellipse cx="5.4" cy="15.2" rx="2" ry="2.7" fill="#f3d6bf"/><ellipse cx="22.3" cy="14.2" rx="1.4" ry="2.3" fill="#e9c4ab"/><path d="M5.6 12 C5.6 7.4 9 6 14 6 C19.4 6 22.4 8 22.4 12.4 C22.4 18 19.6 25.2 14.2 25.2 C9.4 25.2 5.6 19 5.6 12 Z" fill="#f8e3cf"/><path d="M3.3 11.4 C2.3 5.4 6 1.6 12 1.3 C16 1.1 19.6 2 22 0.9 C22.6 3.2 21.8 5.8 20 7.2 C16.4 8.8 11.4 7.8 8.2 9.2 C7.8 11.2 7.4 12.8 6.4 14.2 C5 13.8 3.7 13 3.3 11.4 Z" fill="#1c1c1e"/><path d="M9.6 10.5 C11 9.7 12.6 9.7 13.8 10.3 M17.2 9.6 C18.4 9 19.8 9 20.8 9.7" fill="none" stroke="#3b3331" stroke-width="0.8"/><rect x="8.9" y="12" width="6.2" height="4.3" rx="0.7" fill="#fbf4ee" fill-opacity="0.75" stroke="#29292b" stroke-width="1.05"/><rect x="16.5" y="12" width="5.2" height="4.3" rx="0.7" fill="#fbf4ee" fill-opacity="0.75" stroke="#29292b" stroke-width="1.05"/><path d="M15.1 13.2 H16.5" stroke="#29292b" stroke-width="0.9"/><path d="M12.9 19.2 C14.6 20.2 16.8 20.1 18.4 18.9 C17.6 21 13.9 21.3 12.9 19.2 Z" fill="#fff" stroke="#9a5f58" stroke-width="0.55"/><path d="M16.2 17.3 C16.8 17.7 17.4 17.6 17.8 17.2" fill="none" stroke="#e3a58f" stroke-width="0.6"/></g></svg>
<svg style="left:903.5px;top:710px" width="19" height="16" viewBox="0 0 19 16"><rect x="0" y="0.4" width="18.7" height="4.3" fill="#9a6b14"/><rect x="0" y="5.5" width="18.7" height="4.3" fill="#9a6b14"/><rect x="0" y="10.7" width="18.7" height="4.2" fill="#9a6b14"/><rect x="13.2" y="2" width="4.2" height="1.1" fill="#fff" opacity="0.9"/><rect x="7.2" y="7.1" width="10.2" height="1.1" fill="#fff" opacity="0.85"/><rect x="11.2" y="12.3" width="6.2" height="1.1" fill="#fff" opacity="0.7"/></svg>
<div style="position:absolute;left:1646px;top:709px;width:43px;height:19px;background:#46a2ba;border-radius:9.5px;"></div>
<div style="position:absolute;left:0px;top:741px;width:1815px;height:40px;background:#fbfbfc;"></div>
<div style="position:absolute;left:0px;top:781px;width:1815px;height:1px;background:#d8dadd;"></div>
<div style="position:absolute;left:13px;top:753px;width:12px;height:12px;background:#fff;border:1px solid #b9b9b9;border-radius:0.5px;"></div>
<svg style="left:43px;top:749px" width="18" height="17" viewBox="0 0 18 17"><path d="M9 1.3 L11.3 6.2 L16.7 6.9 L12.8 10.6 L13.8 15.9 L9 13.3 L4.2 15.9 L5.2 10.6 L1.3 6.9 L6.7 6.2 Z" fill="none" stroke="#5f6675" stroke-width="1.2" stroke-linejoin="miter"/></svg>
<svg style="left:572px;top:749px" width="24" height="24" viewBox="0 0 26 26"><defs><linearGradient id="avg12" x1="0" y1="0" x2="1" y2="1"><stop offset="0" stop-color="#71456a"/><stop offset="1" stop-color="#4a2342"/></linearGradient><clipPath id="avc12"><rect width="26" height="26" rx="4"/></clipPath></defs><g clip-path="url(#avc12)"><rect width="26" height="26" fill="url(#avg12)"/><ellipse cx="5.4" cy="15.2" rx="2" ry="2.7" fill="#f3d6bf"/><ellipse cx="22.3" cy="14.2" rx="1.4" ry="2.3" fill="#e9c4ab"/><path d="M5.6 12 C5.6 7.4 9 6 14 6 C19.4 6 22.4 8 22.4 12.4 C22.4 18 19.6 25.2 14.2 25.2 C9.4 25.2 5.6 19 5.6 12 Z" fill="#f8e3cf"/><path d="M3.3 11.4 C2.3 5.4 6 1.6 12 1.3 C16 1.1 19.6 2 22 0.9 C22.6 3.2 21.8 5.8 20 7.2 C16.4 8.8 11.4 7.8 8.2 9.2 C7.8 11.2 7.4 12.8 6.4 14.2 C5 13.8 3.7 13 3.3 11.4 Z" fill="#1c1c1e"/><path d="M9.6 10.5 C11 9.7 12.6 9.7 13.8 10.3 M17.2 9.6 C18.4 9 19.8 9 20.8 9.7" fill="none" stroke="#3b3331" stroke-width="0.8"/><rect x="8.9" y="12" width="6.2" height="4.3" rx="0.7" fill="#fbf4ee" fill-opacity="0.75" stroke="#29292b" stroke-width="1.05"/><rect x="16.5" y="12" width="5.2" height="4.3" rx="0.7" fill="#fbf4ee" fill-opacity="0.75" stroke="#29292b" stroke-width="1.05"/><path d="M15.1 13.2 H16.5" stroke="#29292b" stroke-width="0.9"/><path d="M12.9 19.2 C14.6 20.2 16.8 20.1 18.4 18.9 C17.6 21 13.9 21.3 12.9 19.2 Z" fill="#fff" stroke="#9a5f58" stroke-width="0.55"/><path d="M16.2 17.3 C16.8 17.7 17.4 17.6 17.8 17.2" fill="none" stroke="#e3a58f" stroke-width="0.6"/></g></svg>
<svg style="left:904px;top:751px" width="18" height="18" viewBox="0 0 18 18"><circle cx="8.7" cy="8.3" r="6.9" fill="none" stroke="#555a6d" stroke-width="2.3"/><path d="M9.5 4.6 V9.2 H6.2" fill="none" stroke="#555a6d" stroke-width="1.6"/></svg>
<div style="position:absolute;left:1646px;top:750px;width:72px;height:19px;background:#46a2ba;border-radius:9.5px;"></div>
<div style="position:absolute;left:0px;top:782px;width:1815px;height:40px;background:#fff;"></div>
<div style="position:absolute;left:0px;top:822px;width:1815px;height:1px;background:#d8dadd;"></div>
<div style="position:absolute;left:13px;top:794px;width:12px;height:12px;background:#fff;border:1px solid #b9b9b9;border-radius:0.5px;"></div>
<svg style="left:43px;top:790px" width="18" height="17" viewBox="0 0 18 17"><path d="M9 1.3 L11.3 6.2 L16.7 6.9 L12.8 10.6 L13.8 15.9 L9 13.3 L4.2 15.9 L5.2 10.6 L1.3 6.9 L6.7 6.2 Z" fill="none" stroke="#5f6675" stroke-width="1.2" stroke-linejoin="miter"/></svg>
<svg style="left:572px;top:790px" width="24" height="24" viewBox="0 0 26 26"><defs><linearGradient id="avg13" x1="0" y1="0" x2="1" y2="1"><stop offset="0" stop-color="#71456a"/><stop offset="1" stop-color="#4a2342"/></linearGradient><clipPath id="avc13"><rect width="26" height="26" rx="4"/></clipPath></defs><g clip-path="url(#avc13)"><rect width="26" height="26" fill="url(#avg13)"/><ellipse cx="5.4" cy="15.2" rx="2" ry="2.7" fill="#f3d6bf"/><ellipse cx="22.3" cy="14.2" rx="1.4" ry="2.3" fill="#e9c4ab"/><path d="M5.6 12 C5.6 7.4 9 6 14 6 C19.4 6 22.4 8 22.4 12.4 C22.4 18 19.6 25.2 14.2 25.2 C9.4 25.2 5.6 19 5.6 12 Z" fill="#f8e3cf"/><path d="M3.3 11.4 C2.3 5.4 6 1.6 12 1.3 C16 1.1 19.6 2 22 0.9 C22.6 3.2 21.8 5.8 20 7.2 C16.4 8.8 11.4 7.8 8.2 9.2 C7.8 11.2 7.4 12.8 6.4 14.2 C5 13.8 3.7 13 3.3 11.4 Z" fill="#1c1c1e"/><path d="M9.6 10.5 C11 9.7 12.6 9.7 13.8 10.3 M17.2 9.6 C18.4 9 19.8 9 20.8 9.7" fill="none" stroke="#3b3331" stroke-width="0.8"/><rect x="8.9" y="12" width="6.2" height="4.3" rx="0.7" fill="#fbf4ee" fill-opacity="0.75" stroke="#29292b" stroke-width="1.05"/><rect x="16.5" y="12" width="5.2" height="4.3" rx="0.7" fill="#fbf4ee" fill-opacity="0.75" stroke="#29292b" stroke-width="1.05"/><path d="M15.1 13.2 H16.5" stroke="#29292b" stroke-width="0.9"/><path d="M12.9 19.2 C14.6 20.2 16.8 20.1 18.4 18.9 C17.6 21 13.9 21.3 12.9 19.2 Z" fill="#fff" stroke="#9a5f58" stroke-width="0.55"/><path d="M16.2 17.3 C16.8 17.7 17.4 17.6 17.8 17.2" fill="none" stroke="#e3a58f" stroke-width="0.6"/></g></svg>
<svg style="left:904px;top:792px" width="18" height="18" viewBox="0 0 18 18"><circle cx="8.7" cy="8.3" r="6.9" fill="none" stroke="#555a6d" stroke-width="2.3"/><path d="M9.5 4.6 V9.2 H6.2" fill="none" stroke="#555a6d" stroke-width="1.6"/></svg>
<div style="position:absolute;left:1646px;top:791px;width:43px;height:19px;background:#46a2ba;border-radius:9.5px;"></div>
<div style="position:absolute;left:0px;top:823px;width:1815px;height:40px;background:#fbfbfc;"></div>
<div style="position:absolute;left:0px;top:863px;width:1815px;height:1px;background:#d8dadd;"></div>
<div style="position:absolute;left:13px;top:835px;width:12px;height:12px;background:#fff;border:1px solid #b9b9b9;border-radius:0.5px;"></div>
<svg style="left:43px;top:831px" width="18" height="17" viewBox="0 0 18 17"><path d="M9 1.3 L11.3 6.2 L16.7 6.9 L12.8 10.6 L13.8 15.9 L9 13.3 L4.2 15.9 L5.2 10.6 L1.3 6.9 L6.7 6.2 Z" fill="none" stroke="#5f6675" stroke-width="1.2" stroke-linejoin="miter"/></svg>
<svg style="left:572px;top:831px" width="24" height="24" viewBox="0 0 26 26"><defs><linearGradient id="avg14" x1="0" y1="0" x2="1" y2="1"><stop offset="0" stop-color="#71456a"/><stop offset="1" stop-color="#4a2342"/></linearGradient><clipPath id="avc14"><rect width="26" height="26" rx="4"/></clipPath></defs><g clip-path="url(#avc14)"><rect width="26" height="26" fill="url(#avg14)"/><ellipse cx="5.4" cy="15.2" rx="2" ry="2.7" fill="#f3d6bf"/><ellipse cx="22.3" cy="14.2" rx="1.4" ry="2.3" fill="#e9c4ab"/><path d="M5.6 12 C5.6 7.4 9 6 14 6 C19.4 6 22.4 8 22.4 12.4 C22.4 18 19.6 25.2 14.2 25.2 C9.4 25.2 5.6 19 5.6 12 Z" fill="#f8e3cf"/><path d="M3.3 11.4 C2.3 5.4 6 1.6 12 1.3 C16 1.1 19.6 2 22 0.9 C22.6 3.2 21.8 5.8 20 7.2 C16.4 8.8 11.4 7.8 8.2 9.2 C7.8 11.2 7.4 12.8 6.4 14.2 C5 13.8 3.7 13 3.3 11.4 Z" fill="#1c1c1e"/><path d="M9.6 10.5 C11 9.7 12.6 9.7 13.8 10.3 M17.2 9.6 C18.4 9 19.8 9 20.8 9.7" fill="none" stroke="#3b3331" stroke-width="0.8"/><rect x="8.9" y="12" width="6.2" height="4.3" rx="0.7" fill="#fbf4ee" fill-opacity="0.75" stroke="#29292b" stroke-width="1.05"/><rect x="16.5" y="12" width="5.2" height="4.3" rx="0.7" fill="#fbf4ee" fill-opacity="0.75" stroke="#29292b" stroke-width="1.05"/><path d="M15.1 13.2 H16.5" stroke="#29292b" stroke-width="0.9"/><path d="M12.9 19.2 C14.6 20.2 16.8 20.1 18.4 18.9 C17.6 21 13.9 21.3 12.9 19.2 Z" fill="#fff" stroke="#9a5f58" stroke-width="0.55"/><path d="M16.2 17.3 C16.8 17.7 17.4 17.6 17.8 17.2" fill="none" stroke="#e3a58f" stroke-width="0.6"/></g></svg>
<svg style="left:903px;top:835px" width="20" height="15" viewBox="0 0 20 15"><rect x="0.2" y="0.2" width="19" height="14" rx="1.6" fill="#9a6b14"/><path d="M0.6 4.6 L9.7 10.2 L18.8 4.6" fill="none" stroke="#fff" stroke-width="1.3"/></svg>
<div style="position:absolute;left:1646px;top:832px;width:43px;height:19px;background:#46a2ba;border-radius:9.5px;"></div>
<div style="position:absolute;left:0px;top:864px;width:1815px;height:40px;background:#fff;"></div>
<div style="position:absolute;left:0px;top:904px;width:1815px;height:1px;background:#d8dadd;"></div>
<div style="position:absolute;left:13px;top:876px;width:12px;height:12px;background:#fff;border:1px solid #b9b9b9;border-radius:0.5px;"></div>
<svg style="left:43px;top:872px" width="18" height="17" viewBox="0 0 18 17"><path d="M9 1.3 L11.3 6.2 L16.7 6.9 L12.8 10.6 L13.8 15.9 L9 13.3 L4.2 15.9 L5.2 10.6 L1.3 6.9 L6.7 6.2 Z" fill="none" stroke="#5f6675" stroke-width="1.2" stroke-linejoin="miter"/></svg>
<svg style="left:572px;top:872px" width="24" height="24" viewBox="0 0 26 26"><defs><linearGradient id="avg15" x1="0" y1="0" x2="1" y2="1"><stop offset="0" stop-color="#71456a"/><stop offset="1" stop-color="#4a2342"/></linearGradient><clipPath id="avc15"><rect width="26" height="26" rx="4"/></clipPath></defs><g clip-path="url(#avc15)"><rect width="26" height="26" fill="url(#avg15)"/><ellipse cx="5.4" cy="15.2" rx="2" ry="2.7" fill="#f3d6bf"/><ellipse cx="22.3" cy="14.2" rx="1.4" ry="2.3" fill="#e9c4ab"/><path d="M5.6 12 C5.6 7.4 9 6 14 6 C19.4 6 22.4 8 22.4 12.4 C22.4 18 19.6 25.2 14.2 25.2 C9.4 25.2 5.6 19 5.6 12 Z" fill="#f8e3cf"/><path d="M3.3 11.4 C2.3 5.4 6 1.6 12 1.3 C16 1.1 19.6 2 22 0.9 C22.6 3.2 21.8 5.8 20 7.2 C16.4 8.8 11.4 7.8 8.2 9.2 C7.8 11.2 7.4 12.8 6.4 14.2 C5 13.8 3.7 13 3.3 11.4 Z" fill="#1c1c1e"/><path d="M9.6 10.5 C11 9.7 12.6 9.7 13.8 10.3 M17.2 9.6 C18.4 9 19.8 9 20.8 9.7" fill="none" stroke="#3b3331" stroke-width="0.8"/><rect x="8.9" y="12" width="6.2" height="4.3" rx="0.7" fill="#fbf4ee" fill-opacity="0.75" stroke="#29292b" stroke-width="1.05"/><rect x="16.5" y="12" width="5.2" height="4.3" rx="0.7" fill="#fbf4ee" fill-opacity="0.75" stroke="#29292b" stroke-width="1.05"/><path d="M15.1 13.2 H16.5" stroke="#29292b" stroke-width="0.9"/><path d="M12.9 19.2 C14.6 20.2 16.8 20.1 18.4 18.9 C17.6 21 13.9 21.3 12.9 19.2 Z" fill="#fff" stroke="#9a5f58" stroke-width="0.55"/><path d="M16.2 17.3 C16.8 17.7 17.4 17.6 17.8 17.2" fill="none" stroke="#e3a58f" stroke-width="0.6"/></g></svg>
<svg style="left:904px;top:874px" width="18" height="18" viewBox="0 0 18 18"><circle cx="8.7" cy="8.3" r="6.9" fill="none" stroke="#555a6d" stroke-width="2.3"/><path d="M9.5 4.6 V9.2 H6.2" fill="none" stroke="#555a6d" stroke-width="1.6"/></svg>
<div style="position:absolute;left:1646px;top:873px;width:43px;height:19px;background:#46a2ba;border-radius:9.5px;"></div>
<div style="position:absolute;left:0px;top:905px;width:1815px;height:27px;background:#f9fafb;"></div>
<span class="t" style="left:45.10px;top:11px;font-size:16px;color:#374151;letter-spacing:-0.085px;">Purchase</span>
<span class="t" style="left:134.75px;top:10px;font-size:14px;color:#374151;letter-spacing:-0.094px;">Dashboard</span>
<span class="t" style="left:224.50px;top:10px;font-size:14px;color:#374151;letter-spacing:0.191px;">Orders</span>
<span class="t" style="left:290.50px;top:10px;font-size:14px;color:#374151;letter-spacing:0.143px;">Products</span>
<span class="t" style="left:369.25px;top:10px;font-size:14px;color:#374151;letter-spacing:0.287px;">Reporting</span>
<span class="t" style="left:454.50px;top:10px;font-size:14px;color:#374151;letter-spacing:-0.002px;">Purchase Requisition</span>
<span class="t" style="left:608.75px;top:10px;font-size:14px;color:#374151;letter-spacing:0.331px;">Configuration</span>
<span class="t" style="left:1536.68px;top:5px;font-size:10.5px;color:#fff;">6</span>
<span class="t" style="left:1579.88px;top:5px;font-size:10.5px;color:#fff;">4</span>
<span class="t" style="left:1607.60px;top:10px;font-size:14px;color:#374151;letter-spacing:-0.315px;">My Company (San Francisco)</span>
<span class="t" style="left:24.25px;top:57px;font-size:14px;color:#fff;letter-spacing:0.367px;-webkit-text-stroke:0.55px #fff;">New</span>
<span class="t" style="left:69.20px;top:59px;font-size:17px;color:#374151;letter-spacing:0.165px;">Requests for Quotation</span>
<span class="t" style="left:663.25px;top:58px;font-size:14px;color:#2e7f86;-webkit-text-stroke:0.55px #2e7f86;">2</span>
<span class="t" style="left:675.00px;top:58px;font-size:14px;color:#2e7f86;letter-spacing:0.156px;">selected</span>
<span class="t" style="left:778.00px;top:57px;font-size:14px;color:#fff;letter-spacing:0.351px;-webkit-text-stroke:0.55px #fff;">Confirm Orders</span>
<span class="t" style="left:905.00px;top:57px;font-size:14px;color:#374151;letter-spacing:0.040px;-webkit-text-stroke:0.4px #374151;">Cancel Orders</span>
<span class="t" style="left:1039.50px;top:57px;font-size:14px;color:#374151;letter-spacing:0.613px;-webkit-text-stroke:0.4px #374151;">Print</span>
<span class="t" style="left:1113.75px;top:57px;font-size:14px;color:#374151;letter-spacing:0.305px;-webkit-text-stroke:0.4px #374151;">Actions</span>
<span class="t" style="left:1450.20px;top:57px;font-size:14px;color:#374151;letter-spacing:-0.121px;">1-15 / 15</span>
<span class="t" style="left:13.00px;top:146px;font-size:14px;color:#374151;letter-spacing:-0.393px;">All RFQs</span>
<span class="t" style="left:13.00px;top:196px;font-size:14px;color:#374151;letter-spacing:-0.643px;">My RFQs</span>
<span class="t" style="left:179.50px;top:136px;font-size:19.5px;color:#fff;letter-spacing:0.047px;">10</span>
<span class="t" style="left:344.50px;top:136px;font-size:19.5px;color:#fff;letter-spacing:-0.359px;">0</span>
<span class="t" style="left:499.25px;top:136px;font-size:19.5px;color:#fff;letter-spacing:-0.250px;">11</span>
<span class="t" style="left:165.50px;top:162px;font-size:14.5px;color:#fff;letter-spacing:-0.620px;">To Send</span>
<span class="t" style="left:325.75px;top:162px;font-size:14.5px;color:#fff;letter-spacing:-0.010px;">Waiting</span>
<span class="t" style="left:495.50px;top:162px;font-size:14.5px;color:#fff;letter-spacing:-0.411px;">Late</span>
<span class="t" style="left:182.00px;top:196px;font-size:14px;color:#374151;letter-spacing:-0.828px;">10</span>
<span class="t" style="left:346.00px;top:196px;font-size:14px;color:#374151;letter-spacing:-0.797px;">0</span>
<span class="t" style="left:503.25px;top:196px;font-size:14px;color:#374151;letter-spacing:-0.797px;">11</span>
<span class="t" style="left:1137.00px;top:137px;font-size:14px;color:#374151;letter-spacing:0.074px;">Avg Order Value</span>
<span class="t" style="left:1098.25px;top:191px;font-size:14px;color:#374151;letter-spacing:-0.099px;">Lead Time to Purchase</span>
<span class="t" style="left:1467.75px;top:137px;font-size:14px;color:#374151;letter-spacing:-0.263px;">Purchased Last 7 Days</span>
<span class="t" style="left:1468.25px;top:191px;font-size:14px;color:#374151;letter-spacing:-0.403px;">RFQs Sent Last 7 Days</span>
<span class="t" style="left:1300.50px;top:137px;font-size:14px;color:#374151;letter-spacing:-0.186px;">$ 7,821.87</span>
<span class="t" style="left:1312.50px;top:191px;font-size:14px;color:#374151;letter-spacing:-0.566px;">7 Days</span>
<span class="t" style="left:1679.25px;top:137px;font-size:14px;color:#374151;letter-spacing:-0.172px;">$ 20,971.40</span>
<span class="t" style="left:1711.50px;top:191px;font-size:14px;color:#374151;letter-spacing:-0.297px;">0</span>
<span class="t" style="left:75.75px;top:259px;font-size:14px;color:#111827;letter-spacing:0.207px;-webkit-text-stroke:0.5px #111827;">Reference</span>
<span class="t" style="left:202.75px;top:259px;font-size:14px;color:#111827;letter-spacing:0.475px;-webkit-text-stroke:0.5px #111827;">Vendor</span>
<span class="t" style="left:343.75px;top:259px;font-size:14px;color:#111827;letter-spacing:-0.070px;-webkit-text-stroke:0.5px #111827;">Company</span>
<span class="t" style="left:573.00px;top:259px;font-size:14px;color:#111827;letter-spacing:0.230px;-webkit-text-stroke:0.5px #111827;">Buyer</span>
<span class="t" style="left:734.00px;top:259px;font-size:14px;color:#111827;letter-spacing:0.332px;-webkit-text-stroke:0.5px #111827;">Order Deadline</span>
<span class="t" style="left:901.50px;top:259px;font-size:14px;color:#111827;letter-spacing:0.585px;-webkit-text-stroke:0.5px #111827;">Activities</span>
<span class="t" style="left:1130.00px;top:259px;font-size:14px;color:#111827;letter-spacing:0.210px;-webkit-text-stroke:0.5px #111827;">Source Document</span>
<span class="t" style="left:1399.25px;top:259px;font-size:14px;color:#111827;letter-spacing:0.730px;-webkit-text-stroke:0.5px #111827;">Total</span>
<span class="t" style="left:1478.90px;top:259px;font-size:14px;color:#111827;letter-spacing:0.185px;-webkit-text-stroke:0.5px #111827;">Company Currency Total</span>
<span class="t" style="left:1646.40px;top:259px;font-size:14px;color:#111827;letter-spacing:0.259px;-webkit-text-stroke:0.5px #111827;">Status</span>
<span class="t" style="left:75.75px;top:299px;font-size:14px;color:#2983b0;letter-spacing:-0.106px;-webkit-text-stroke:0.55px #2983b0;">P00015</span>
<span class="t" style="left:203.00px;top:299px;font-size:14px;color:#2983b0;letter-spacing:-0.150px;">Ready Mat</span>
<span class="t" style="left:343.75px;top:299px;font-size:14px;color:#2983b0;letter-spacing:-0.307px;">My Company (San Francisco)</span>
<span class="t" style="left:600.75px;top:299px;font-size:14px;color:#2983b0;letter-spacing:0.345px;">Mitchell Admin</span>
<span class="t" style="left:734.00px;top:299px;font-size:14px;color:#9a6b01;letter-spacing:0.160px;-webkit-text-stroke:0.55px #9a6b01;">Today</span>
<span class="t" style="left:1378.07px;top:299px;font-size:14px;color:#2983b0;letter-spacing:-0.117px;">$ 801.46</span>
<span class="t" style="left:1594.41px;top:299px;font-size:14px;color:#2983b0;letter-spacing:-0.128px;">801.46</span>
<span class="t" style="left:1656.40px;top:299px;font-size:11.5px;color:#fff;letter-spacing:-0.541px;-webkit-text-stroke:0.55px #fff;">RFQ</span>
<span class="t" style="left:75.75px;top:340px;font-size:14px;color:#111111;letter-spacing:-0.106px;-webkit-text-stroke:0.55px #111111;">P00014</span>
<span class="t" style="left:203.00px;top:340px;font-size:14px;color:#111111;letter-spacing:0.266px;">Azure Interior</span>
<span class="t" style="left:343.75px;top:340px;font-size:14px;color:#111111;letter-spacing:-0.307px;">My Company (San Francisco)</span>
<span class="t" style="left:600.75px;top:340px;font-size:14px;color:#111111;letter-spacing:0.345px;">Mitchell Admin</span>
<span class="t" style="left:734.00px;top:340px;font-size:14px;color:#9a6b01;letter-spacing:0.160px;-webkit-text-stroke:0.55px #9a6b01;">Today</span>
<span class="t" style="left:1393.40px;top:340px;font-size:14px;color:#111111;letter-spacing:-0.117px;">$ 0.00</span>
<span class="t" style="left:1609.76px;top:340px;font-size:14px;color:#111111;letter-spacing:-0.136px;">0.00</span>
<span class="t" style="left:1656.40px;top:340px;font-size:11.5px;color:#fff;letter-spacing:-0.541px;-webkit-text-stroke:0.55px #fff;">RFQ</span>
<span class="t" style="left:75.75px;top:381px;font-size:14px;color:#2983b0;letter-spacing:-0.106px;-webkit-text-stroke:0.55px #2983b0;">P00013</span>
<span class="t" style="left:203.00px;top:381px;font-size:14px;color:#2983b0;letter-spacing:0.128px;">Deco Addict</span>
<span class="t" style="left:343.75px;top:381px;font-size:14px;color:#2983b0;letter-spacing:-0.307px;">My Company (San Francisco)</span>
<span class="t" style="left:600.75px;top:381px;font-size:14px;color:#2983b0;letter-spacing:0.345px;">Mitchell Admin</span>
<span class="t" style="left:734.00px;top:381px;font-size:14px;color:#9a6b01;letter-spacing:0.160px;-webkit-text-stroke:0.55px #9a6b01;">Today</span>
<span class="t" style="left:1378.07px;top:381px;font-size:14px;color:#2983b0;letter-spacing:-0.117px;">$ 920.00</span>
<span class="t" style="left:1594.41px;top:381px;font-size:14px;color:#2983b0;letter-spacing:-0.128px;">920.00</span>
<span class="t" style="left:1656.40px;top:381px;font-size:11.5px;color:#fff;letter-spacing:-0.541px;-webkit-text-stroke:0.55px #fff;">RFQ</span>
<span class="t" style="left:75.75px;top:422px;font-size:14px;color:#2983b0;letter-spacing:-0.106px;-webkit-text-stroke:0.55px #2983b0;">P00012</span>
<span class="t" style="left:203.00px;top:422px;font-size:14px;color:#2983b0;letter-spacing:0.195px;">Anita Oliver</span>
<span class="t" style="left:343.75px;top:422px;font-size:14px;color:#2983b0;letter-spacing:-0.307px;">My Company (San Francisco)</span>
<span class="t" style="left:600.75px;top:422px;font-size:14px;color:#2983b0;letter-spacing:0.345px;">Mitchell Admin</span>
<span class="t" style="left:734.00px;top:422px;font-size:14px;color:#9a6b01;letter-spacing:0.160px;-webkit-text-stroke:0.55px #9a6b01;">Today</span>
<span class="t" style="left:1393.40px;top:422px;font-size:14px;color:#2983b0;letter-spacing:-0.117px;">$ 0.00</span>
<span class="t" style="left:1609.76px;top:422px;font-size:14px;color:#2983b0;letter-spacing:-0.136px;">0.00</span>
<span class="t" style="left:1656.40px;top:422px;font-size:11.5px;color:#fff;letter-spacing:-0.541px;-webkit-text-stroke:0.55px #fff;">RFQ</span>
<span class="t" style="left:75.75px;top:463px;font-size:14px;color:#374151;letter-spacing:0.103px;-webkit-text-stroke:0.55px #374151;">P00011</span>
<span class="t" style="left:203.00px;top:463px;font-size:14px;color:#374151;letter-spacing:-0.150px;">Ready Mat</span>
<span class="t" style="left:343.75px;top:463px;font-size:14px;color:#374151;letter-spacing:-0.307px;">My Company (San Francisco)</span>
<span class="t" style="left:600.75px;top:463px;font-size:14px;color:#374151;letter-spacing:0.345px;">Mitchell Admin</span>
<span class="t" style="left:1366.57px;top:463px;font-size:14px;color:#374151;letter-spacing:-0.110px;-webkit-text-stroke:0.55px #374151;">$ 6,596.40</span>
<span class="t" style="left:1582.92px;top:463px;font-size:14px;color:#374151;letter-spacing:-0.117px;">6,596.40</span>
<span class="t" style="left:1656.50px;top:463px;font-size:12px;color:#fff;letter-spacing:0.084px;-webkit-text-stroke:0.55px #fff;">Purchase Order</span>
<span class="t" style="left:75.75px;top:504px;font-size:14px;color:#374151;letter-spacing:-0.106px;-webkit-text-stroke:0.55px #374151;">P00010</span>
<span class="t" style="left:203.00px;top:504px;font-size:14px;color:#374151;letter-spacing:0.266px;">Azure Interior</span>
<span class="t" style="left:343.75px;top:504px;font-size:14px;color:#374151;letter-spacing:-0.307px;">My Company (San Francisco)</span>
<span class="t" style="left:600.75px;top:504px;font-size:14px;color:#374151;letter-spacing:0.345px;">Mitchell Admin</span>
<span class="t" style="left:1366.57px;top:504px;font-size:14px;color:#374151;letter-spacing:-0.110px;-webkit-text-stroke:0.55px #374151;">$ 2,880.75</span>
<span class="t" style="left:1582.92px;top:504px;font-size:14px;color:#374151;letter-spacing:-0.117px;">2,880.75</span>
<span class="t" style="left:1656.50px;top:504px;font-size:12px;color:#fff;letter-spacing:0.084px;-webkit-text-stroke:0.55px #fff;">Purchase Order</span>
<span class="t" style="left:75.75px;top:545px;font-size:14px;color:#374151;letter-spacing:-0.106px;-webkit-text-stroke:0.55px #374151;">P00009</span>
<span class="t" style="left:203.00px;top:545px;font-size:14px;color:#374151;letter-spacing:0.116px;">Gemini Furniture</span>
<span class="t" style="left:343.75px;top:545px;font-size:14px;color:#374151;letter-spacing:-0.307px;">My Company (San Francisco)</span>
<span class="t" style="left:600.75px;top:545px;font-size:14px;color:#374151;letter-spacing:0.345px;">Mitchell Admin</span>
<span class="t" style="left:1358.89px;top:545px;font-size:14px;color:#374151;letter-spacing:-0.111px;-webkit-text-stroke:0.55px #374151;">$ 14,375.00</span>
<span class="t" style="left:1575.24px;top:545px;font-size:14px;color:#374151;letter-spacing:-0.117px;">14,375.00</span>
<span class="t" style="left:1656.50px;top:545px;font-size:12px;color:#fff;letter-spacing:0.084px;-webkit-text-stroke:0.55px #fff;">Purchase Order</span>
<span class="t" style="left:75.75px;top:586px;font-size:14px;color:#374151;letter-spacing:-0.106px;-webkit-text-stroke:0.55px #374151;">P00008</span>
<span class="t" style="left:203.00px;top:586px;font-size:14px;color:#374151;letter-spacing:0.098px;">Wood Corner</span>
<span class="t" style="left:343.75px;top:586px;font-size:14px;color:#374151;letter-spacing:-0.307px;">My Company (San Francisco)</span>
<span class="t" style="left:600.75px;top:586px;font-size:14px;color:#374151;letter-spacing:0.345px;">Mitchell Admin</span>
<span class="t" style="left:1366.57px;top:586px;font-size:14px;color:#374151;letter-spacing:-0.110px;-webkit-text-stroke:0.55px #374151;">$ 7,435.33</span>
<span class="t" style="left:1582.92px;top:586px;font-size:14px;color:#374151;letter-spacing:-0.117px;">7,435.33</span>
<span class="t" style="left:1656.50px;top:586px;font-size:12px;color:#fff;letter-spacing:0.084px;-webkit-text-stroke:0.55px #fff;">Purchase Order</span>
<span class="t" style="left:75.75px;top:627px;font-size:14px;color:#2983b0;letter-spacing:-0.106px;-webkit-text-stroke:0.55px #2983b0;">P00007</span>
<span class="t" style="left:203.00px;top:627px;font-size:14px;color:#2983b0;letter-spacing:-0.150px;">Ready Mat</span>
<span class="t" style="left:343.75px;top:627px;font-size:14px;color:#2983b0;letter-spacing:-0.307px;">My Company (San Francisco)</span>
<span class="t" style="left:600.75px;top:627px;font-size:14px;color:#2983b0;letter-spacing:0.345px;">Mitchell Admin</span>
<span class="t" style="left:734.00px;top:627px;font-size:14px;color:#9a6b01;letter-spacing:0.160px;-webkit-text-stroke:0.55px #9a6b01;">Today</span>
<span class="t" style="left:925.20px;top:627px;font-size:14px;color:#2983b0;letter-spacing:0.116px;">Check competitors</span>
<span class="t" style="left:1366.57px;top:627px;font-size:14px;color:#2983b0;letter-spacing:-0.110px;">$ 1,405.88</span>
<span class="t" style="left:1582.92px;top:627px;font-size:14px;color:#2983b0;letter-spacing:-0.117px;">1,405.88</span>
<span class="t" style="left:1656.40px;top:627px;font-size:11.5px;color:#fff;letter-spacing:-0.541px;-webkit-text-stroke:0.55px #fff;">RFQ</span>
<span class="t" style="left:75.75px;top:668px;font-size:14px;color:#2983b0;letter-spacing:-0.106px;-webkit-text-stroke:0.55px #2983b0;">P00006</span>
<span class="t" style="left:203.00px;top:668px;font-size:14px;color:#2983b0;letter-spacing:0.098px;">Wood Corner</span>
<span class="t" style="left:343.75px;top:668px;font-size:14px;color:#2983b0;letter-spacing:-0.307px;">My Company (San Francisco)</span>
<span class="t" style="left:600.75px;top:668px;font-size:14px;color:#2983b0;letter-spacing:0.345px;">Mitchell Admin</span>
<span class="t" style="left:734.00px;top:668px;font-size:14px;color:#9a6b01;letter-spacing:0.160px;-webkit-text-stroke:0.55px #9a6b01;">Today</span>
<span class="t" style="left:925.20px;top:668px;font-size:14px;color:#2983b0;letter-spacing:0.154px;">Check optional products</span>
<span class="t" style="left:1366.57px;top:668px;font-size:14px;color:#2983b0;letter-spacing:-0.110px;">$ 1,535.25</span>
<span class="t" style="left:1582.92px;top:668px;font-size:14px;color:#2983b0;letter-spacing:-0.117px;">1,535.25</span>
<span class="t" style="left:1656.40px;top:668px;font-size:11.5px;color:#fff;letter-spacing:-0.541px;-webkit-text-stroke:0.55px #fff;">RFQ</span>
<span class="t" style="left:75.75px;top:709px;font-size:14px;color:#2983b0;letter-spacing:-0.106px;-webkit-text-stroke:0.55px #2983b0;">P00005</span>
<span class="t" style="left:203.00px;top:709px;font-size:14px;color:#2983b0;letter-spacing:0.128px;">Deco Addict</span>
<span class="t" style="left:343.75px;top:709px;font-size:14px;color:#2983b0;letter-spacing:-0.307px;">My Company (San Francisco)</span>
<span class="t" style="left:600.75px;top:709px;font-size:14px;color:#2983b0;letter-spacing:0.345px;">Mitchell Admin</span>
<span class="t" style="left:734.00px;top:709px;font-size:14px;color:#9a6b01;letter-spacing:0.160px;-webkit-text-stroke:0.55px #9a6b01;">Today</span>
<span class="t" style="left:925.20px;top:709px;font-size:14px;color:#2983b0;letter-spacing:0.084px;">Get approval</span>
<span class="t" style="left:1366.57px;top:709px;font-size:14px;color:#2983b0;letter-spacing:-0.110px;">$ 9,956.70</span>
<span class="t" style="left:1582.92px;top:709px;font-size:14px;color:#2983b0;letter-spacing:-0.117px;">9,956.70</span>
<span class="t" style="left:1656.40px;top:709px;font-size:11.5px;color:#fff;letter-spacing:-0.541px;-webkit-text-stroke:0.55px #fff;">RFQ</span>
<span class="t" style="left:75.75px;top:750px;font-size:14px;color:#2983b0;letter-spacing:-0.106px;-webkit-text-stroke:0.55px #2983b0;">P00004</span>
<span class="t" style="left:203.00px;top:750px;font-size:14px;color:#2983b0;letter-spacing:-0.150px;">Ready Mat</span>
<span class="t" style="left:343.75px;top:750px;font-size:14px;color:#2983b0;letter-spacing:-0.307px;">My Company (San Francisco)</span>
<span class="t" style="left:600.75px;top:750px;font-size:14px;color:#2983b0;letter-spacing:0.345px;">Mitchell Admin</span>
<span class="t" style="left:734.00px;top:750px;font-size:14px;color:#9a6b01;letter-spacing:0.160px;-webkit-text-stroke:0.55px #9a6b01;">Today</span>
<span class="t" style="left:1358.89px;top:750px;font-size:14px;color:#2983b0;letter-spacing:-0.111px;">$ 16,747.45</span>
<span class="t" style="left:1575.24px;top:750px;font-size:14px;color:#2983b0;letter-spacing:-0.117px;">16,747.45</span>
<span class="t" style="left:1656.30px;top:750px;font-size:12px;color:#fff;letter-spacing:-0.266px;-webkit-text-stroke:0.55px #fff;">RFQ Sent</span>
<span class="t" style="left:75.75px;top:791px;font-size:14px;color:#2983b0;letter-spacing:-0.106px;-webkit-text-stroke:0.55px #2983b0;">P00003</span>
<span class="t" style="left:203.00px;top:791px;font-size:14px;color:#2983b0;letter-spacing:0.266px;">Azure Interior</span>
<span class="t" style="left:343.75px;top:791px;font-size:14px;color:#2983b0;letter-spacing:-0.307px;">My Company (San Francisco)</span>
<span class="t" style="left:600.75px;top:791px;font-size:14px;color:#2983b0;letter-spacing:0.345px;">Mitchell Admin</span>
<span class="t" style="left:734.00px;top:791px;font-size:14px;color:#9a6b01;letter-spacing:0.160px;-webkit-text-stroke:0.55px #9a6b01;">Today</span>
<span class="t" style="left:1378.07px;top:791px;font-size:14px;color:#2983b0;letter-spacing:-0.117px;">$ 293.25</span>
<span class="t" style="left:1594.41px;top:791px;font-size:14px;color:#2983b0;letter-spacing:-0.128px;">293.25</span>
<span class="t" style="left:1656.40px;top:791px;font-size:11.5px;color:#fff;letter-spacing:-0.541px;-webkit-text-stroke:0.55px #fff;">RFQ</span>
<span class="t" style="left:75.75px;top:832px;font-size:14px;color:#2983b0;letter-spacing:-0.106px;-webkit-text-stroke:0.55px #2983b0;">P00002</span>
<span class="t" style="left:203.00px;top:832px;font-size:14px;color:#2983b0;letter-spacing:0.116px;">Gemini Furniture</span>
<span class="t" style="left:343.75px;top:832px;font-size:14px;color:#2983b0;letter-spacing:-0.307px;">My Company (San Francisco)</span>
<span class="t" style="left:600.75px;top:832px;font-size:14px;color:#2983b0;letter-spacing:0.345px;">Mitchell Admin</span>
<span class="t" style="left:734.00px;top:832px;font-size:14px;color:#9a6b01;letter-spacing:0.160px;-webkit-text-stroke:0.55px #9a6b01;">Today</span>
<span class="t" style="left:925.20px;top:832px;font-size:14px;color:#2983b0;letter-spacing:0.042px;">Send specifications</span>
<span class="t" style="left:1366.57px;top:832px;font-size:14px;color:#2983b0;letter-spacing:-0.110px;">$ 3,559.25</span>
<span class="t" style="left:1582.92px;top:832px;font-size:14px;color:#2983b0;letter-spacing:-0.117px;">3,559.25</span>
<span class="t" style="left:1656.40px;top:832px;font-size:11.5px;color:#fff;letter-spacing:-0.541px;-webkit-text-stroke:0.55px #fff;">RFQ</span>
<span class="t" style="left:75.75px;top:873px;font-size:14px;color:#2983b0;letter-spacing:-0.106px;-webkit-text-stroke:0.55px #2983b0;">P00001</span>
<span class="t" style="left:203.00px;top:873px;font-size:14px;color:#2983b0;letter-spacing:0.098px;">Wood Corner</span>
<span class="t" style="left:343.75px;top:873px;font-size:14px;color:#2983b0;letter-spacing:-0.307px;">My Company (San Francisco)</span>
<span class="t" style="left:600.75px;top:873px;font-size:14px;color:#2983b0;letter-spacing:0.345px;">Mitchell Admin</span>
<span class="t" style="left:734.00px;top:873px;font-size:14px;color:#9a6b01;letter-spacing:0.160px;-webkit-text-stroke:0.55px #9a6b01;">Today</span>
<span class="t" style="left:1366.57px;top:873px;font-size:14px;color:#2983b0;letter-spacing:-0.110px;">$ 3,480.48</span>
<span class="t" style="left:1582.92px;top:873px;font-size:14px;color:#2983b0;letter-spacing:-0.117px;">3,480.48</span>
<span class="t" style="left:1656.40px;top:873px;font-size:11.5px;color:#fff;letter-spacing:-0.541px;-webkit-text-stroke:0.55px #fff;">RFQ</span>
<span class="t" style="left:1378.07px;top:913px;font-size:14px;color:#111827;letter-spacing:-0.117px;-webkit-text-stroke:0.55px #111827;">$ 801.46</span>
</body></html>
